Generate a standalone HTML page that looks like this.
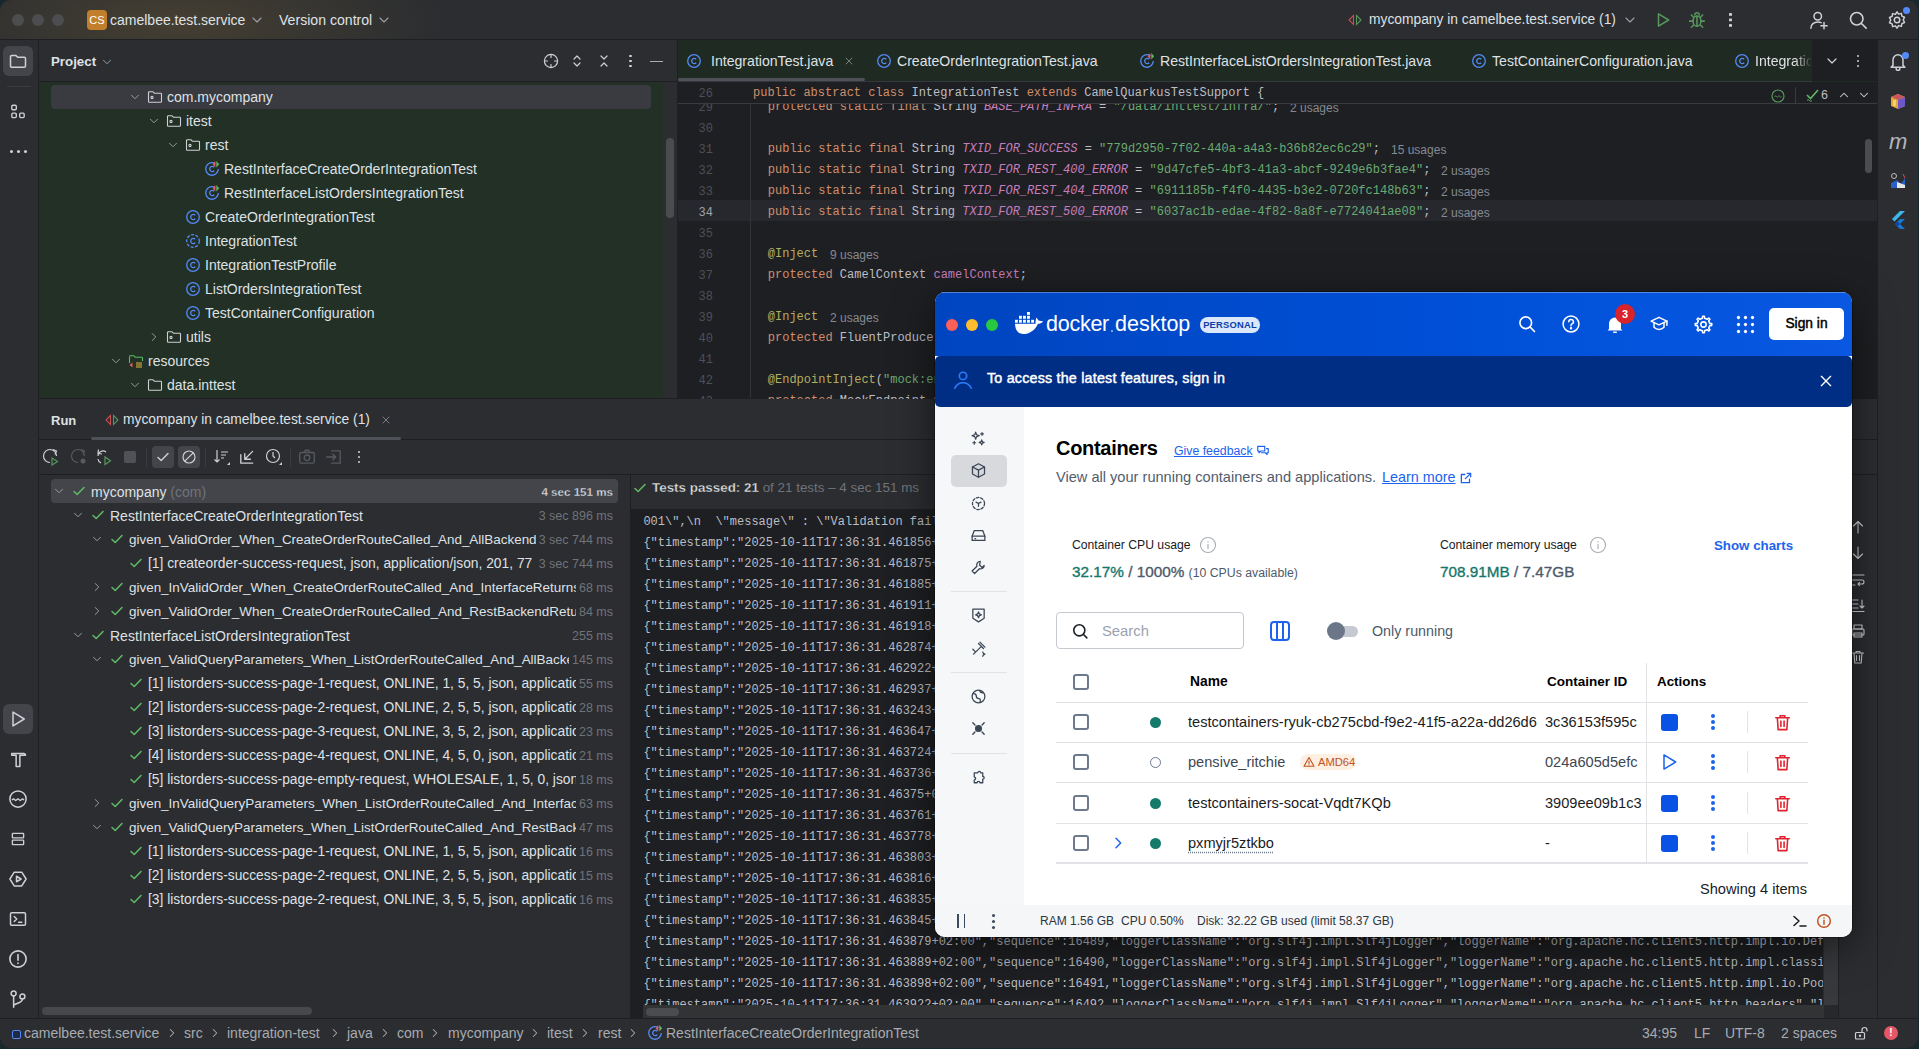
<!DOCTYPE html><html><head><meta charset="utf-8"><style>html,body{margin:0;padding:0;width:1919px;height:1049px;overflow:hidden;background:#1e1f22;font-family:"Liberation Sans",sans-serif;} div,svg{box-sizing:border-box}</style></head><body><div style="position:relative;width:1919px;height:1049px;overflow:hidden;background:#17292c"><div style="position:absolute;left:0;top:0;width:1918px;height:1048px;border-radius:11px;overflow:hidden;background:#1e1f22">
<div style="position:absolute;left:0px;top:0px;width:1919px;height:40px;background:#2b2d30;background:radial-gradient(ellipse 270px 80px at 175px 22px, rgba(130,105,55,0.30), rgba(130,105,55,0) 100%), #2b2d30;"></div>
<div style="position:absolute;left:0px;top:39px;width:1919px;height:1px;background:#1e1f22;"></div>
<div style="position:absolute;left:12px;top:14px;width:12px;height:12px;border-radius:6px;background:#4c4d4f"></div>
<div style="position:absolute;left:32px;top:14px;width:12px;height:12px;border-radius:6px;background:#4c4d4f"></div>
<div style="position:absolute;left:52px;top:14px;width:12px;height:12px;border-radius:6px;background:#4c4d4f"></div>
<div style="position:absolute;left:87px;top:10px;width:20px;height:20px;border-radius:4px;background:#c27f2b;color:#fff;font-size:11px;line-height:20px;text-align:center;font-family:'Liberation Sans',sans-serif;">CS</div>
<div style="position:absolute;left:110px;top:9.5px;height:21px;line-height:21px;font-size:14px;color:#dfe1e5;font-weight:normal;font-family:'Liberation Sans', sans-serif;white-space:pre;">camelbee.test.service</div>
<svg style="position:absolute;left:249.0px;top:12.0px;" width="16" height="16" viewBox="0 0 16 16" fill="none" stroke="#9da0a8" stroke-width="1.1" stroke-linecap="round" stroke-linejoin="round"><path d="M4 6l4 4 4-4"/></svg>
<div style="position:absolute;left:279px;top:9.5px;height:21px;line-height:21px;font-size:14.1px;color:#dfe1e5;font-weight:normal;font-family:'Liberation Sans', sans-serif;white-space:pre;">Version control</div>
<svg style="position:absolute;left:376.0px;top:12.0px;" width="16" height="16" viewBox="0 0 16 16" fill="none" stroke="#9da0a8" stroke-width="1.1" stroke-linecap="round" stroke-linejoin="round"><path d="M4 6l4 4 4-4"/></svg>
<svg style="position:absolute;left:1347px;top:12px;" width="16" height="16" viewBox="0 0 16 16" fill="none"><path d="M6.5 3.5L2 8l4.5 4.5z" stroke="#c94f4f" stroke-width="1.1" fill="none"/><path d="M9.5 3.5L14 8l-4.5 4.5z" stroke="#57965c" stroke-width="1.1" fill="none"/></svg>
<div style="position:absolute;left:1369px;top:10.0px;height:20px;line-height:20px;font-size:13.8px;color:#dfe1e5;font-weight:normal;font-family:'Liberation Sans', sans-serif;white-space:pre;">mycompany in camelbee.test.service (1)</div>
<svg style="position:absolute;left:1622.0px;top:12.0px;" width="16" height="16" viewBox="0 0 16 16" fill="none" stroke="#9da0a8" stroke-width="1.1" stroke-linecap="round" stroke-linejoin="round"><path d="M4 6l4 4 4-4"/></svg>
<svg style="position:absolute;left:1654.0px;top:11.0px;" width="18" height="18" viewBox="0 0 16 16" fill="none" stroke="#57965c" stroke-width="1.4" stroke-linecap="round" stroke-linejoin="round"><path d="M4 2.5v11l9-5.5z"/></svg>
<svg style="position:absolute;left:1688.0px;top:11.0px;" width="18" height="18" viewBox="0 0 16 16" fill="none" stroke="#57965c" stroke-width="1.4" stroke-linecap="round" stroke-linejoin="round"><ellipse cx="8" cy="9" rx="3.5" ry="4.5"/><path d="M8 4.5V13.5M4.5 9H1.5M14.5 9h-3M5 5.5L3 3.5M11 5.5l2-2M5 12.5l-2 2M11 12.5l2 2M6 3.5a2 2 0 0 1 4 0"/></svg>
<div style="position:absolute;left:1729px;top:13px;width:3px;height:14px;background:radial-gradient(circle at 1.5px 1.5px,#ced0d6 1.4px,transparent 1.6px) 0 0/3px 5.5px repeat-y"></div>
<svg style="position:absolute;left:1809.0px;top:10.0px;" width="20" height="20" viewBox="0 0 16 16" fill="none" stroke="#ced0d6" stroke-width="1.2" stroke-linecap="round" stroke-linejoin="round"><circle cx="7" cy="5" r="3"/><path d="M1.5 14.5c0-3 2.5-5 5.5-5 1 0 2 .2 2.7.6M12 10v5M9.5 12.5h5"/></svg>
<svg style="position:absolute;left:1848.0px;top:10.0px;" width="20" height="20" viewBox="0 0 16 16" fill="none" stroke="#ced0d6" stroke-width="1.3" stroke-linecap="round" stroke-linejoin="round"><circle cx="7" cy="7" r="5"/><path d="M11 11l3.5 3.5"/></svg>
<svg style="position:absolute;left:1887.0px;top:10.0px;" width="20" height="20" viewBox="0 0 16 16" fill="none" stroke="#ced0d6" stroke-width="1.2" stroke-linecap="round" stroke-linejoin="round"><circle cx="8" cy="8" r="2.2"/><path d="M8 1.5l1.3 1.8 2.2-.6.4 2.2 2.1.9-1 2 1 2.2-2.1.9-.4 2.2-2.2-.6L8 14.5l-1.3-1.8-2.2.6-.4-2.2-2.1-.9 1-2.2-1-2 2.1-.9.4-2.2 2.2.6z"/></svg>
<div style="position:absolute;left:1903px;top:7px;width:7px;height:7px;border-radius:4px;background:#548af7"></div>
<div style="position:absolute;left:0px;top:40px;width:38px;height:978px;background:#2b2d30;"></div>
<div style="position:absolute;left:38px;top:40px;width:1px;height:978px;background:#1e1f22;"></div>
<div style="position:absolute;left:1878px;top:40px;width:41px;height:978px;background:#2b2d30;"></div>
<div style="position:absolute;left:1877px;top:40px;width:1px;height:978px;background:#1e1f22;"></div>
<div style="position:absolute;left:0px;top:1018px;width:1919px;height:31px;background:#2b2d30;"></div>
<div style="position:absolute;left:0px;top:1018px;width:1919px;height:1px;background:#1e1f22;"></div>
<div style="position:absolute;left:3px;top:46px;width:30px;height:30px;background:#43454a;border-radius:6px;"></div>
<svg style="position:absolute;left:8.0px;top:51.0px;" width="20" height="20" viewBox="0 0 16 16" fill="none" stroke="#ced0d6" stroke-width="1.2" stroke-linecap="round" stroke-linejoin="round"><path d="M2 4.5a1 1 0 0 1 1-1h3.2l1.5 1.5H13a1 1 0 0 1 1 1V12a1 1 0 0 1-1 1H3a1 1 0 0 1-1-1z"/></svg>
<div style="position:absolute;left:7px;top:86px;width:24px;height:1px;background:#393b40;"></div>
<svg style="position:absolute;left:9.0px;top:103.0px;" width="18" height="18" viewBox="0 0 16 16" fill="none" stroke="#ced0d6" stroke-width="1.2" stroke-linecap="round" stroke-linejoin="round"><rect x="2.5" y="2" width="4" height="4" rx="1"/><rect x="2.5" y="9" width="4" height="4" rx="1"/><rect x="9.5" y="9" width="4" height="4" rx="1"/></svg>
<div style="position:absolute;left:9.5px;top:150px;width:3px;height:3px;border-radius:2px;background:#ced0d6"></div>
<div style="position:absolute;left:16.5px;top:150px;width:3px;height:3px;border-radius:2px;background:#ced0d6"></div>
<div style="position:absolute;left:23.5px;top:150px;width:3px;height:3px;border-radius:2px;background:#ced0d6"></div>
<div style="position:absolute;left:3px;top:704px;width:30px;height:30px;background:#43454a;border-radius:6px;"></div>
<svg style="position:absolute;left:8.0px;top:709.0px;" width="20" height="20" viewBox="0 0 16 16" fill="none" stroke="#ced0d6" stroke-width="1.2" stroke-linecap="round" stroke-linejoin="round"><path d="M4 2.5v11l9-5.5z"/></svg>
<svg style="position:absolute;left:8.0px;top:749.0px;" width="20" height="20" viewBox="0 0 16 16" fill="none" stroke="#ced0d6" stroke-width="1.2" stroke-linecap="round" stroke-linejoin="round"><path d="M3 3.5h9.5c1 0 1.5.8 1.5 1.5H9.5v9h-3V5H3z"/></svg>
<svg style="position:absolute;left:8.0px;top:789.0px;" width="20" height="20" viewBox="0 0 16 16" fill="none" stroke="#ced0d6" stroke-width="1.2" stroke-linecap="round" stroke-linejoin="round"><circle cx="8" cy="8" r="6.5"/><path d="M3.5 8.5c.7-.8 1.2-.8 1.8 0s1.1.8 1.8 0 1.1-.8 1.8 0 1.1.8 1.8 0 1.1-.8 1.8 0"/></svg>
<svg style="position:absolute;left:9.0px;top:830.0px;" width="18" height="18" viewBox="0 0 16 16" fill="none" stroke="#ced0d6" stroke-width="1.2" stroke-linecap="round" stroke-linejoin="round"><rect x="3" y="3" width="10" height="4" rx=".5"/><rect x="3" y="9" width="10" height="4" rx=".5"/></svg>
<svg style="position:absolute;left:8.0px;top:869.0px;" width="20" height="20" viewBox="0 0 16 16" fill="none" stroke="#ced0d6" stroke-width="1.2" stroke-linecap="round" stroke-linejoin="round"><path d="M5 2.5h6L14.5 8 11 13.5H5L1.5 8z"/><path d="M6.8 5.8v4.4L10.5 8z"/></svg>
<svg style="position:absolute;left:8.0px;top:909.0px;" width="20" height="20" viewBox="0 0 16 16" fill="none" stroke="#ced0d6" stroke-width="1.2" stroke-linecap="round" stroke-linejoin="round"><rect x="2" y="3" width="12" height="10" rx="1"/><path d="M5 6l2 2-2 2M8.5 10.5h2.5"/></svg>
<svg style="position:absolute;left:8.0px;top:949.0px;" width="20" height="20" viewBox="0 0 16 16" fill="none" stroke="#ced0d6" stroke-width="1.3" stroke-linecap="round" stroke-linejoin="round"><circle cx="8" cy="8" r="6.5"/><path d="M8 4.5v4.5M8 11.2v.3"/></svg>
<svg style="position:absolute;left:8.0px;top:989.0px;" width="20" height="20" viewBox="0 0 16 16" fill="none" stroke="#ced0d6" stroke-width="1.2" stroke-linecap="round" stroke-linejoin="round"><circle cx="4.5" cy="3.5" r="2"/><circle cx="11.5" cy="6" r="2"/><path d="M4.5 5.5v9M11.5 8c0 3-4 3-7 5"/></svg>
<svg style="position:absolute;left:1888.0px;top:51.0px;" width="20" height="20" viewBox="0 0 16 16" fill="none" stroke="#ced0d6" stroke-width="1.2" stroke-linecap="round" stroke-linejoin="round"><path d="M4 11.5V7a4 4 0 0 1 8 0v4.5l1.5 1.5h-11z"/><path d="M6.5 14a1.5 1.5 0 0 0 3 0"/></svg>
<div style="position:absolute;left:1902px;top:52px;width:7px;height:7px;border-radius:4px;background:#548af7"></div>
<svg style="position:absolute;left:1888px;top:91px;" width="20" height="20" viewBox="0 0 20 20" fill="none"><path d="M3 6l7-3 7 3v9l-7 3-7-3z" fill="#e0a93a"/><path d="M10 3l7 3-7 3-7-3z" fill="#c9565d"/><path d="M10 9v9l7-3V6z" fill="#6e58c9"/><path d="M5 9h3v6H5z" fill="#f5d06a"/></svg>
<div style="position:absolute;left:1889px;top:124.5px;height:33px;line-height:33px;font-size:22px;color:#b4b6bb;font-weight:normal;font-family:'Liberation Sans', sans-serif;white-space:pre;font-style:italic;">m</div>
<svg style="position:absolute;left:1888px;top:171px;" width="20" height="20" viewBox="0 0 20 20" fill="none"><circle cx="6" cy="5" r="2.5" stroke="#bbb" fill="none"/><path d="M3 12l6-3 4 4 4-6v10H3z" fill="#2b5fc7"/><path d="M9 11l8 3v3H9z" fill="#e6e6e6"/><path d="M15 3l2 4" stroke="#d94c4c"/></svg>
<svg style="position:absolute;left:1888px;top:209px;" width="20" height="22" viewBox="0 0 20 22" fill="none"><path d="M12 2L4 10l2.5 2.5L17 2z" fill="#3fb5e8"/><path d="M12 10l-5 5 5 5h5l-5-5 5-5z" fill="#1976d2"/><path d="M9.5 12.5l2.5 2.5-2.5 2.5-2.5-2.5z" fill="#0d47a1"/></svg>
<div style="position:absolute;left:39px;top:40px;width:638px;height:42px;background:#2b2d30;"></div>
<div style="position:absolute;left:51px;top:51.5px;height:19px;line-height:19px;font-size:13.3px;color:#dfe1e5;font-weight:bold;font-family:'Liberation Sans', sans-serif;white-space:pre;">Project</div>
<svg style="position:absolute;left:100.0px;top:55.0px;" width="14" height="14" viewBox="0 0 16 16" fill="none" stroke="#9da0a8" stroke-width="1.1" stroke-linecap="round" stroke-linejoin="round"><path d="M4 6l4 4 4-4"/></svg>
<svg style="position:absolute;left:543.0px;top:53.0px;" width="16" height="16" viewBox="0 0 16 16" fill="none" stroke="#ced0d6" stroke-width="1.2" stroke-linecap="round" stroke-linejoin="round"><circle cx="8" cy="8" r="6.6"/><path d="M8 2v2.5M8 11.5V14M2 8h2.5M11.5 8H14"/></svg>
<svg style="position:absolute;left:569.0px;top:53.0px;" width="16" height="16" viewBox="0 0 16 16" fill="none" stroke="#ced0d6" stroke-width="1.2" stroke-linecap="round" stroke-linejoin="round"><path d="M5 6l3-3 3 3M5 10l3 3 3-3"/></svg>
<svg style="position:absolute;left:596.0px;top:53.0px;" width="16" height="16" viewBox="0 0 16 16" fill="none" stroke="#ced0d6" stroke-width="1.2" stroke-linecap="round" stroke-linejoin="round"><path d="M5 3l3 3 3-3M5 13l3-3 3 3"/></svg>
<div style="position:absolute;left:629px;top:54.7px;width:2.6px;height:2.6px;border-radius:2px;background:#ced0d6"></div>
<div style="position:absolute;left:629px;top:59.7px;width:2.6px;height:2.6px;border-radius:2px;background:#ced0d6"></div>
<div style="position:absolute;left:629px;top:64.7px;width:2.6px;height:2.6px;border-radius:2px;background:#ced0d6"></div>
<div style="position:absolute;left:649.5px;top:60.5px;width:13px;height:1.8px;background:#a9acb1;"></div>
<div style="position:absolute;left:39px;top:82px;width:624px;height:316px;background:#223025;"></div>
<div style="position:absolute;left:39px;top:81px;width:638px;height:1px;background:#1e1f22;"></div>
<div style="position:absolute;left:663px;top:82px;width:14px;height:316px;background:#2b2d30;"></div>
<div style="position:absolute;left:666px;top:138px;width:8px;height:80px;background:#4a4c50;border-radius:4px;"></div>
<div style="position:absolute;left:677px;top:40px;width:1px;height:359px;background:#1e1f22;"></div>
<div style="position:absolute;left:39px;top:398px;width:1838px;height:1px;background:#1e1f22;"></div>
<div style="position:absolute;left:51px;top:85px;width:600px;height:24px;background:#393b40;border-radius:4px;"></div>
<svg style="position:absolute;left:128.0px;top:90.0px;" width="14" height="14" viewBox="0 0 16 16" fill="none" stroke="#9da0a8" stroke-width="1.1" stroke-linecap="round" stroke-linejoin="round"><path d="M4 6l4 4 4-4"/></svg>
<svg style="position:absolute;left:147.0px;top:89.0px;" width="16" height="16" viewBox="0 0 16 16" fill="none" stroke="#ced0d6" stroke-width="1.1" stroke-linecap="round" stroke-linejoin="round"><path d="M1.5 3.5a.8.8 0 0 1 .8-.8h3.5l1.5 1.5h6.4a.8.8 0 0 1 .8.8v7.5a.8.8 0 0 1-.8.8H2.3a.8.8 0 0 1-.8-.8z"/><circle cx="5" cy="8.5" r="1.1"/></svg>
<div style="position:absolute;left:167px;top:86.5px;height:21px;line-height:21px;font-size:14px;color:#dfe1e5;font-weight:normal;font-family:'Liberation Sans', sans-serif;white-space:pre;">com.mycompany</div>
<svg style="position:absolute;left:147.0px;top:114.0px;" width="14" height="14" viewBox="0 0 16 16" fill="none" stroke="#9da0a8" stroke-width="1.1" stroke-linecap="round" stroke-linejoin="round"><path d="M4 6l4 4 4-4"/></svg>
<svg style="position:absolute;left:166.0px;top:113.0px;" width="16" height="16" viewBox="0 0 16 16" fill="none" stroke="#ced0d6" stroke-width="1.1" stroke-linecap="round" stroke-linejoin="round"><path d="M1.5 3.5a.8.8 0 0 1 .8-.8h3.5l1.5 1.5h6.4a.8.8 0 0 1 .8.8v7.5a.8.8 0 0 1-.8.8H2.3a.8.8 0 0 1-.8-.8z"/><circle cx="5" cy="8.5" r="1.1"/></svg>
<div style="position:absolute;left:186px;top:110.5px;height:21px;line-height:21px;font-size:14px;color:#dfe1e5;font-weight:normal;font-family:'Liberation Sans', sans-serif;white-space:pre;">itest</div>
<svg style="position:absolute;left:166.0px;top:138.0px;" width="14" height="14" viewBox="0 0 16 16" fill="none" stroke="#9da0a8" stroke-width="1.1" stroke-linecap="round" stroke-linejoin="round"><path d="M4 6l4 4 4-4"/></svg>
<svg style="position:absolute;left:185.0px;top:137.0px;" width="16" height="16" viewBox="0 0 16 16" fill="none" stroke="#ced0d6" stroke-width="1.1" stroke-linecap="round" stroke-linejoin="round"><path d="M1.5 3.5a.8.8 0 0 1 .8-.8h3.5l1.5 1.5h6.4a.8.8 0 0 1 .8.8v7.5a.8.8 0 0 1-.8.8H2.3a.8.8 0 0 1-.8-.8z"/><circle cx="5" cy="8.5" r="1.1"/></svg>
<div style="position:absolute;left:205px;top:134.5px;height:21px;line-height:21px;font-size:14px;color:#dfe1e5;font-weight:normal;font-family:'Liberation Sans', sans-serif;white-space:pre;">rest</div>
<svg style="position:absolute;left:204px;top:161px;" width="16" height="16" viewBox="0 0 16 16" fill="none"><path d="M11.5 2.7A6.3 6.3 0 1 0 14.3 8" stroke="#548af7" stroke-width="1.3"/><path d="M10.2 6.2a2.6 2.6 0 1 0 0 3.6" stroke="#548af7" stroke-width="1.3"/><path d="M11.3 0L8.6 3.2l2.7 3.2z" fill="#e55765"/><path d="M12.3 0l2.9 3.2-2.9 3.2z" fill="#5fb865"/></svg>
<div style="position:absolute;left:224px;top:158.5px;height:21px;line-height:21px;font-size:14px;color:#dfe1e5;font-weight:normal;font-family:'Liberation Sans', sans-serif;white-space:pre;">RestInterfaceCreateOrderIntegrationTest</div>
<svg style="position:absolute;left:204px;top:185px;" width="16" height="16" viewBox="0 0 16 16" fill="none"><path d="M11.5 2.7A6.3 6.3 0 1 0 14.3 8" stroke="#548af7" stroke-width="1.3"/><path d="M10.2 6.2a2.6 2.6 0 1 0 0 3.6" stroke="#548af7" stroke-width="1.3"/><path d="M11.3 0L8.6 3.2l2.7 3.2z" fill="#e55765"/><path d="M12.3 0l2.9 3.2-2.9 3.2z" fill="#5fb865"/></svg>
<div style="position:absolute;left:224px;top:182.5px;height:21px;line-height:21px;font-size:14px;color:#dfe1e5;font-weight:normal;font-family:'Liberation Sans', sans-serif;white-space:pre;">RestInterfaceListOrdersIntegrationTest</div>
<svg style="position:absolute;left:185px;top:209px;" width="16" height="16" viewBox="0 0 16 16" fill="none"><circle cx="8" cy="8" r="6.3" stroke="#548af7" stroke-width="1.3"/><path d="M10.2 6.2a2.6 2.6 0 1 0 0 3.6" stroke="#548af7" stroke-width="1.3"/></svg>
<div style="position:absolute;left:205px;top:206.5px;height:21px;line-height:21px;font-size:14px;color:#dfe1e5;font-weight:normal;font-family:'Liberation Sans', sans-serif;white-space:pre;">CreateOrderIntegrationTest</div>
<svg style="position:absolute;left:185px;top:233px;" width="16" height="16" viewBox="0 0 16 16" fill="none"><circle cx="8" cy="8" r="6.3" stroke="#548af7" stroke-width="1.3" stroke-dasharray="3 1.5"/><path d="M10.2 6.2a2.6 2.6 0 1 0 0 3.6" stroke="#548af7" stroke-width="1.3"/></svg>
<div style="position:absolute;left:205px;top:230.5px;height:21px;line-height:21px;font-size:14px;color:#dfe1e5;font-weight:normal;font-family:'Liberation Sans', sans-serif;white-space:pre;">IntegrationTest</div>
<svg style="position:absolute;left:185px;top:257px;" width="16" height="16" viewBox="0 0 16 16" fill="none"><circle cx="8" cy="8" r="6.3" stroke="#548af7" stroke-width="1.3"/><path d="M10.2 6.2a2.6 2.6 0 1 0 0 3.6" stroke="#548af7" stroke-width="1.3"/></svg>
<div style="position:absolute;left:205px;top:254.5px;height:21px;line-height:21px;font-size:14px;color:#dfe1e5;font-weight:normal;font-family:'Liberation Sans', sans-serif;white-space:pre;">IntegrationTestProfile</div>
<svg style="position:absolute;left:185px;top:281px;" width="16" height="16" viewBox="0 0 16 16" fill="none"><circle cx="8" cy="8" r="6.3" stroke="#548af7" stroke-width="1.3"/><path d="M10.2 6.2a2.6 2.6 0 1 0 0 3.6" stroke="#548af7" stroke-width="1.3"/></svg>
<div style="position:absolute;left:205px;top:278.5px;height:21px;line-height:21px;font-size:14px;color:#dfe1e5;font-weight:normal;font-family:'Liberation Sans', sans-serif;white-space:pre;">ListOrdersIntegrationTest</div>
<svg style="position:absolute;left:185px;top:305px;" width="16" height="16" viewBox="0 0 16 16" fill="none"><circle cx="8" cy="8" r="6.3" stroke="#548af7" stroke-width="1.3"/><path d="M10.2 6.2a2.6 2.6 0 1 0 0 3.6" stroke="#548af7" stroke-width="1.3"/></svg>
<div style="position:absolute;left:205px;top:302.5px;height:21px;line-height:21px;font-size:14px;color:#dfe1e5;font-weight:normal;font-family:'Liberation Sans', sans-serif;white-space:pre;">TestContainerConfiguration</div>
<svg style="position:absolute;left:147.0px;top:330.0px;" width="14" height="14" viewBox="0 0 16 16" fill="none" stroke="#9da0a8" stroke-width="1.1" stroke-linecap="round" stroke-linejoin="round"><path d="M6 4l4 4-4 4"/></svg>
<svg style="position:absolute;left:166.0px;top:329.0px;" width="16" height="16" viewBox="0 0 16 16" fill="none" stroke="#ced0d6" stroke-width="1.1" stroke-linecap="round" stroke-linejoin="round"><path d="M1.5 3.5a.8.8 0 0 1 .8-.8h3.5l1.5 1.5h6.4a.8.8 0 0 1 .8.8v7.5a.8.8 0 0 1-.8.8H2.3a.8.8 0 0 1-.8-.8z"/><circle cx="5" cy="8.5" r="1.1"/></svg>
<div style="position:absolute;left:186px;top:326.5px;height:21px;line-height:21px;font-size:14px;color:#dfe1e5;font-weight:normal;font-family:'Liberation Sans', sans-serif;white-space:pre;">utils</div>
<svg style="position:absolute;left:109.0px;top:354.0px;" width="14" height="14" viewBox="0 0 16 16" fill="none" stroke="#9da0a8" stroke-width="1.1" stroke-linecap="round" stroke-linejoin="round"><path d="M4 6l4 4 4-4"/></svg>
<svg style="position:absolute;left:128px;top:353px;" width="16" height="16" viewBox="0 0 16 16" fill="none"><path d="M1.5 3.5a.8.8 0 0 1 .8-.8h3.5l1.5 1.5h6.4a.8.8 0 0 1 .8.8V8" stroke="#5fb865" stroke-width="1.1"/><path d="M1.5 3.5V10" stroke="#5fb865" stroke-width="1.1"/><path d="M4.5 9.5L1.5 12l3 2.5z" fill="#e55765"/><path d="M8 10h6M8 12h6M8 14h6" stroke="#e8b53e" stroke-width="1"/></svg>
<div style="position:absolute;left:148px;top:350.5px;height:21px;line-height:21px;font-size:14px;color:#dfe1e5;font-weight:normal;font-family:'Liberation Sans', sans-serif;white-space:pre;">resources</div>
<svg style="position:absolute;left:128.0px;top:378.0px;" width="14" height="14" viewBox="0 0 16 16" fill="none" stroke="#9da0a8" stroke-width="1.1" stroke-linecap="round" stroke-linejoin="round"><path d="M4 6l4 4 4-4"/></svg>
<svg style="position:absolute;left:147.0px;top:377.0px;" width="16" height="16" viewBox="0 0 16 16" fill="none" stroke="#ced0d6" stroke-width="1.1" stroke-linecap="round" stroke-linejoin="round"><path d="M1.5 3.5a.8.8 0 0 1 .8-.8h3.5l1.5 1.5h6.4a.8.8 0 0 1 .8.8v7.5a.8.8 0 0 1-.8.8H2.3a.8.8 0 0 1-.8-.8z"/></svg>
<div style="position:absolute;left:167px;top:374.5px;height:21px;line-height:21px;font-size:14px;color:#dfe1e5;font-weight:normal;font-family:'Liberation Sans', sans-serif;white-space:pre;">data.inttest</div>
<div style="position:absolute;left:678px;top:40px;width:1199px;height:42px;background:#1f2a22;"></div>
<div style="position:absolute;left:678px;top:82px;width:1199px;height:316px;background:#1e1f22;"></div>
<div style="position:absolute;left:678px;top:78px;width:187px;height:3px;background:#4e5157;border-radius:2px;"></div>
<svg style="position:absolute;left:686px;top:53px;" width="16" height="16" viewBox="0 0 16 16" fill="none"><circle cx="8" cy="8" r="6.3" stroke="#548af7" stroke-width="1.3"/><path d="M10.2 6.2a2.6 2.6 0 1 0 0 3.6" stroke="#548af7" stroke-width="1.3"/></svg>
<div style="position:absolute;left:711px;top:50.5px;height:21px;line-height:21px;font-size:14.1px;color:#dfe1e5;font-weight:normal;font-family:'Liberation Sans', sans-serif;white-space:pre;">IntegrationTest.java</div>
<svg style="position:absolute;left:843.0px;top:55.0px;" width="12" height="12" viewBox="0 0 16 16" fill="none" stroke="#8c8f96" stroke-width="1.1" stroke-linecap="round" stroke-linejoin="round"><path d="M4 4l8 8M12 4l-8 8"/></svg>
<svg style="position:absolute;left:876px;top:53px;" width="16" height="16" viewBox="0 0 16 16" fill="none"><circle cx="8" cy="8" r="6.3" stroke="#548af7" stroke-width="1.3"/><path d="M10.2 6.2a2.6 2.6 0 1 0 0 3.6" stroke="#548af7" stroke-width="1.3"/></svg>
<div style="position:absolute;left:897px;top:50.5px;height:21px;line-height:21px;font-size:14.1px;color:#dfe1e5;font-weight:normal;font-family:'Liberation Sans', sans-serif;white-space:pre;">CreateOrderIntegrationTest.java</div>
<svg style="position:absolute;left:1139px;top:53px;" width="16" height="16" viewBox="0 0 16 16" fill="none"><path d="M11.5 2.7A6.3 6.3 0 1 0 14.3 8" stroke="#548af7" stroke-width="1.3"/><path d="M10.2 6.2a2.6 2.6 0 1 0 0 3.6" stroke="#548af7" stroke-width="1.3"/><path d="M11.3 0L8.6 3.2l2.7 3.2z" fill="#e55765"/><path d="M12.3 0l2.9 3.2-2.9 3.2z" fill="#5fb865"/></svg>
<div style="position:absolute;left:1160px;top:50.5px;height:21px;line-height:21px;font-size:14.1px;color:#dfe1e5;font-weight:normal;font-family:'Liberation Sans', sans-serif;white-space:pre;">RestInterfaceListOrdersIntegrationTest.java</div>
<svg style="position:absolute;left:1471px;top:53px;" width="16" height="16" viewBox="0 0 16 16" fill="none"><circle cx="8" cy="8" r="6.3" stroke="#548af7" stroke-width="1.3"/><path d="M10.2 6.2a2.6 2.6 0 1 0 0 3.6" stroke="#548af7" stroke-width="1.3"/></svg>
<div style="position:absolute;left:1492px;top:50.5px;height:21px;line-height:21px;font-size:14.1px;color:#dfe1e5;font-weight:normal;font-family:'Liberation Sans', sans-serif;white-space:pre;">TestContainerConfiguration.java</div>
<svg style="position:absolute;left:1734px;top:53px;" width="16" height="16" viewBox="0 0 16 16" fill="none"><circle cx="8" cy="8" r="6.3" stroke="#548af7" stroke-width="1.3"/><path d="M10.2 6.2a2.6 2.6 0 1 0 0 3.6" stroke="#548af7" stroke-width="1.3"/></svg>
<div style="position:absolute;left:1755px;top:50px;width:57px;height:22px;overflow:hidden;"><div style="line-height:22px;font-size:14.1px;color:#dfe1e5;white-space:pre;-webkit-mask-image:linear-gradient(90deg,#000 70%,transparent 100%)">IntegrationTest.java</div></div>
<div style="position:absolute;left:1812px;top:40px;width:65px;height:41px;background:#1e1f22;"></div>
<svg style="position:absolute;left:1824.0px;top:53.0px;" width="16" height="16" viewBox="0 0 16 16" fill="none" stroke="#ced0d6" stroke-width="1.2" stroke-linecap="round" stroke-linejoin="round"><path d="M4 6l4 4 4-4"/></svg>
<div style="position:absolute;left:1856.7px;top:54.7px;width:2.6px;height:2.6px;border-radius:2px;background:#ced0d6"></div>
<div style="position:absolute;left:1856.7px;top:59.7px;width:2.6px;height:2.6px;border-radius:2px;background:#ced0d6"></div>
<div style="position:absolute;left:1856.7px;top:64.7px;width:2.6px;height:2.6px;border-radius:2px;background:#ced0d6"></div>
<div style="position:absolute;left:678px;top:81px;width:1134px;height:1px;background:#34373b;"></div>
<div style="position:absolute;left:678px;top:200px;width:1199px;height:21px;background:#26282e;"></div>
<div style="position:absolute;left:750px;top:103px;width:1px;height:295px;background:#313438;"></div>
<div style="position:absolute;right:1205px;top:98.0px;height:21px;line-height:21px;font-size:12px;color:#4b5059;font-weight:normal;font-family:'Liberation Mono', monospace;white-space:pre;text-align:right;">29</div>
<div style="position:absolute;left:767.8px;top:97.0px;height:21px;line-height:21px;font-size:12px;font-family:'Liberation Mono', monospace;white-space:pre;"><span style="color:#cf8e6d;">protected </span><span style="color:#cf8e6d;">static </span><span style="color:#cf8e6d;">final </span><span style="color:#bcbec4;">String </span><span style="color:#c77dbb;font-style:italic;">BASE_PATH_INFRA</span><span style="color:#bcbec4;"> = </span><span style="color:#6aab73;">&quot;/data/inttest/infra/&quot;</span><span style="color:#bcbec4;">;</span></div>
<div style="position:absolute;left:1290px;top:98.5px;height:18px;line-height:18px;font-size:12px;color:#868a91;font-weight:normal;font-family:'Liberation Sans', sans-serif;white-space:pre;">2 usages</div>
<div style="position:absolute;right:1205px;top:119.0px;height:21px;line-height:21px;font-size:12px;color:#4b5059;font-weight:normal;font-family:'Liberation Mono', monospace;white-space:pre;text-align:right;">30</div>
<div style="position:absolute;right:1205px;top:140.0px;height:21px;line-height:21px;font-size:12px;color:#4b5059;font-weight:normal;font-family:'Liberation Mono', monospace;white-space:pre;text-align:right;">31</div>
<div style="position:absolute;left:767.8px;top:139.0px;height:21px;line-height:21px;font-size:12px;font-family:'Liberation Mono', monospace;white-space:pre;"><span style="color:#cf8e6d;">public </span><span style="color:#cf8e6d;">static </span><span style="color:#cf8e6d;">final </span><span style="color:#bcbec4;">String </span><span style="color:#c77dbb;font-style:italic;">TXID_FOR_SUCCESS</span><span style="color:#bcbec4;"> = </span><span style="color:#6aab73;">&quot;779d2950-7f02-440a-a4a3-b36b82ec6c29&quot;</span><span style="color:#bcbec4;">;</span></div>
<div style="position:absolute;left:1391px;top:140.5px;height:18px;line-height:18px;font-size:12px;color:#868a91;font-weight:normal;font-family:'Liberation Sans', sans-serif;white-space:pre;">15 usages</div>
<div style="position:absolute;right:1205px;top:161.0px;height:21px;line-height:21px;font-size:12px;color:#4b5059;font-weight:normal;font-family:'Liberation Mono', monospace;white-space:pre;text-align:right;">32</div>
<div style="position:absolute;left:767.8px;top:160.0px;height:21px;line-height:21px;font-size:12px;font-family:'Liberation Mono', monospace;white-space:pre;"><span style="color:#cf8e6d;">public </span><span style="color:#cf8e6d;">static </span><span style="color:#cf8e6d;">final </span><span style="color:#bcbec4;">String </span><span style="color:#c77dbb;font-style:italic;">TXID_FOR_REST_400_ERROR</span><span style="color:#bcbec4;"> = </span><span style="color:#6aab73;">&quot;9d47cfe5-4bf3-41a3-abcf-9249e6b3fae4&quot;</span><span style="color:#bcbec4;">;</span></div>
<div style="position:absolute;left:1441px;top:161.5px;height:18px;line-height:18px;font-size:12px;color:#868a91;font-weight:normal;font-family:'Liberation Sans', sans-serif;white-space:pre;">2 usages</div>
<div style="position:absolute;right:1205px;top:182.0px;height:21px;line-height:21px;font-size:12px;color:#4b5059;font-weight:normal;font-family:'Liberation Mono', monospace;white-space:pre;text-align:right;">33</div>
<div style="position:absolute;left:767.8px;top:181.0px;height:21px;line-height:21px;font-size:12px;font-family:'Liberation Mono', monospace;white-space:pre;"><span style="color:#cf8e6d;">public </span><span style="color:#cf8e6d;">static </span><span style="color:#cf8e6d;">final </span><span style="color:#bcbec4;">String </span><span style="color:#c77dbb;font-style:italic;">TXID_FOR_REST_404_ERROR</span><span style="color:#bcbec4;"> = </span><span style="color:#6aab73;">&quot;6911185b-f4f0-4435-b3e2-0720fc148b63&quot;</span><span style="color:#bcbec4;">;</span></div>
<div style="position:absolute;left:1441px;top:182.5px;height:18px;line-height:18px;font-size:12px;color:#868a91;font-weight:normal;font-family:'Liberation Sans', sans-serif;white-space:pre;">2 usages</div>
<div style="position:absolute;right:1205px;top:203.0px;height:21px;line-height:21px;font-size:12px;color:#a1a3ab;font-weight:normal;font-family:'Liberation Mono', monospace;white-space:pre;text-align:right;">34</div>
<div style="position:absolute;left:767.8px;top:202.0px;height:21px;line-height:21px;font-size:12px;font-family:'Liberation Mono', monospace;white-space:pre;"><span style="color:#cf8e6d;">public </span><span style="color:#cf8e6d;">static </span><span style="color:#cf8e6d;">final </span><span style="color:#bcbec4;">String </span><span style="color:#c77dbb;font-style:italic;">TXID_FOR_REST_500_ERROR</span><span style="color:#bcbec4;"> = </span><span style="color:#6aab73;">&quot;6037ac1b-edae-4f82-8a8f-e7724041ae08&quot;</span><span style="color:#bcbec4;">;</span></div>
<div style="position:absolute;left:1441px;top:203.5px;height:18px;line-height:18px;font-size:12px;color:#868a91;font-weight:normal;font-family:'Liberation Sans', sans-serif;white-space:pre;">2 usages</div>
<div style="position:absolute;right:1205px;top:224.0px;height:21px;line-height:21px;font-size:12px;color:#4b5059;font-weight:normal;font-family:'Liberation Mono', monospace;white-space:pre;text-align:right;">35</div>
<div style="position:absolute;right:1205px;top:245.0px;height:21px;line-height:21px;font-size:12px;color:#4b5059;font-weight:normal;font-family:'Liberation Mono', monospace;white-space:pre;text-align:right;">36</div>
<div style="position:absolute;left:767.8px;top:244.0px;height:21px;line-height:21px;font-size:12px;font-family:'Liberation Mono', monospace;white-space:pre;"><span style="color:#b3ae60;">@Inject</span></div>
<div style="position:absolute;left:830px;top:245.5px;height:18px;line-height:18px;font-size:12px;color:#868a91;font-weight:normal;font-family:'Liberation Sans', sans-serif;white-space:pre;">9 usages</div>
<div style="position:absolute;right:1205px;top:266.0px;height:21px;line-height:21px;font-size:12px;color:#4b5059;font-weight:normal;font-family:'Liberation Mono', monospace;white-space:pre;text-align:right;">37</div>
<div style="position:absolute;left:767.8px;top:265.0px;height:21px;line-height:21px;font-size:12px;font-family:'Liberation Mono', monospace;white-space:pre;"><span style="color:#cf8e6d;">protected </span><span style="color:#bcbec4;">CamelContext </span><span style="color:#c77dbb;">camelContext</span><span style="color:#bcbec4;">;</span></div>
<div style="position:absolute;right:1205px;top:287.0px;height:21px;line-height:21px;font-size:12px;color:#4b5059;font-weight:normal;font-family:'Liberation Mono', monospace;white-space:pre;text-align:right;">38</div>
<div style="position:absolute;right:1205px;top:308.0px;height:21px;line-height:21px;font-size:12px;color:#4b5059;font-weight:normal;font-family:'Liberation Mono', monospace;white-space:pre;text-align:right;">39</div>
<div style="position:absolute;left:767.8px;top:307.0px;height:21px;line-height:21px;font-size:12px;font-family:'Liberation Mono', monospace;white-space:pre;"><span style="color:#b3ae60;">@Inject</span></div>
<div style="position:absolute;left:830px;top:308.5px;height:18px;line-height:18px;font-size:12px;color:#868a91;font-weight:normal;font-family:'Liberation Sans', sans-serif;white-space:pre;">2 usages</div>
<div style="position:absolute;right:1205px;top:329.0px;height:21px;line-height:21px;font-size:12px;color:#4b5059;font-weight:normal;font-family:'Liberation Mono', monospace;white-space:pre;text-align:right;">40</div>
<div style="position:absolute;left:767.8px;top:328.0px;height:21px;line-height:21px;font-size:12px;font-family:'Liberation Mono', monospace;white-space:pre;"><span style="color:#cf8e6d;">protected </span><span style="color:#bcbec4;">FluentProducerTemplate </span><span style="color:#c77dbb;">fluentProducerTemplate</span><span style="color:#bcbec4;">;</span></div>
<div style="position:absolute;right:1205px;top:350.0px;height:21px;line-height:21px;font-size:12px;color:#4b5059;font-weight:normal;font-family:'Liberation Mono', monospace;white-space:pre;text-align:right;">41</div>
<div style="position:absolute;right:1205px;top:371.0px;height:21px;line-height:21px;font-size:12px;color:#4b5059;font-weight:normal;font-family:'Liberation Mono', monospace;white-space:pre;text-align:right;">42</div>
<div style="position:absolute;left:767.8px;top:370.0px;height:21px;line-height:21px;font-size:12px;font-family:'Liberation Mono', monospace;white-space:pre;"><span style="color:#b3ae60;">@EndpointInject</span><span style="color:#bcbec4;">(</span><span style="color:#6aab73;">&quot;mock:endpoint&quot;</span><span style="color:#bcbec4;">)</span></div>
<div style="position:absolute;right:1205px;top:392.0px;height:21px;line-height:21px;font-size:12px;color:#4b5059;font-weight:normal;font-family:'Liberation Mono', monospace;white-space:pre;text-align:right;">43</div>
<div style="position:absolute;left:767.8px;top:391.0px;height:21px;line-height:21px;font-size:12px;font-family:'Liberation Mono', monospace;white-space:pre;"><span style="color:#cf8e6d;">protected </span><span style="color:#bcbec4;">MockEndpoint </span><span style="color:#c77dbb;">mockEndpoint</span><span style="color:#bcbec4;">;</span></div>
<div style="position:absolute;left:678px;top:82px;width:1199px;height:21px;background:#1e1f22;"></div>
<div style="position:absolute;left:678px;top:103px;width:1199px;height:1px;background:#393b40;"></div>
<div style="position:absolute;right:1205px;top:84.0px;height:21px;line-height:21px;font-size:12px;color:#4b5059;font-weight:normal;font-family:'Liberation Mono', monospace;white-space:pre;text-align:right;">26</div>
<div style="position:absolute;left:753px;top:83.0px;height:21px;line-height:21px;font-size:12px;font-family:'Liberation Mono', monospace;white-space:pre;"><span style="color:#cf8e6d;">public </span><span style="color:#cf8e6d;">abstract </span><span style="color:#cf8e6d;">class </span><span style="color:#bcbec4;">IntegrationTest </span><span style="color:#cf8e6d;">extends </span><span style="color:#bcbec4;">CamelQuarkusTestSupport {</span></div>
<div style="position:absolute;left:1765px;top:82px;width:112px;height:21px;background:#1e1f22;"></div>
<svg style="position:absolute;left:1770px;top:88px;" width="16" height="16" viewBox="0 0 16 16" fill="none"><circle cx="8" cy="8" r="6" stroke="#57965c" stroke-width="1.2"/><path d="M4.5 8.5c.7-.8 1.2-.8 1.8 0s1.1.8 1.8 0 1.1-.8 1.8 0 1.1.8 1.8 0" stroke="#57965c" stroke-width="1"/></svg>
<div style="position:absolute;left:1795px;top:87px;width:1px;height:16px;background:#393b40;"></div>
<svg style="position:absolute;left:1805px;top:87px;" width="16" height="16" viewBox="0 0 16 16" fill="none"><path d="M2 8l3.5 3.5L13 3" stroke="#5fb865" stroke-width="1.6"/><path d="M2 13.5c1-1 1.5-1 2.5 0s1.5 1 2.5 0" stroke="#5fb865" stroke-width="1"/></svg>
<div style="position:absolute;left:1821px;top:86.0px;height:18px;line-height:18px;font-size:12.5px;color:#bcbec4;font-weight:normal;font-family:'Liberation Sans', sans-serif;white-space:pre;">6</div>
<svg style="position:absolute;left:1837.0px;top:88.0px;" width="14" height="14" viewBox="0 0 16 16" fill="none" stroke="#ced0d6" stroke-width="1.2" stroke-linecap="round" stroke-linejoin="round"><path d="M4 10l4-4 4 4"/></svg>
<svg style="position:absolute;left:1857.0px;top:88.0px;" width="14" height="14" viewBox="0 0 16 16" fill="none" stroke="#ced0d6" stroke-width="1.2" stroke-linecap="round" stroke-linejoin="round"><path d="M4 6l4 4 4-4"/></svg>
<div style="position:absolute;left:1865px;top:139px;width:7px;height:34px;background:#4a4c50;border-radius:4px;"></div>
<div style="position:absolute;left:39px;top:399px;width:1838px;height:619px;background:#2b2d30;"></div>
<div style="position:absolute;left:39px;top:439px;width:1838px;height:1px;background:#1e1f22;"></div>
<div style="position:absolute;left:39px;top:474px;width:1838px;height:1px;background:#1e1f22;"></div>
<div style="position:absolute;left:51px;top:410.5px;height:19px;line-height:19px;font-size:13px;color:#dfe1e5;font-weight:bold;font-family:'Liberation Sans', sans-serif;white-space:pre;">Run</div>
<svg style="position:absolute;left:104px;top:412px;" width="16" height="16" viewBox="0 0 16 16" fill="none"><path d="M6.5 3.5L2 8l4.5 4.5z" stroke="#c94f4f" stroke-width="1.1"/><path d="M9.5 3.5L14 8l-4.5 4.5z" stroke="#57965c" stroke-width="1.1"/></svg>
<div style="position:absolute;left:123px;top:410.0px;height:20px;line-height:20px;font-size:13.8px;color:#dfe1e5;font-weight:normal;font-family:'Liberation Sans', sans-serif;white-space:pre;">mycompany in camelbee.test.service (1)</div>
<svg style="position:absolute;left:380.0px;top:414.0px;" width="12" height="12" viewBox="0 0 16 16" fill="none" stroke="#8c8f96" stroke-width="1.1" stroke-linecap="round" stroke-linejoin="round"><path d="M4 4l8 8M12 4l-8 8"/></svg>
<div style="position:absolute;left:91px;top:437px;width:310px;height:3px;background:#4e5157;border-radius:2px;"></div>
<svg style="position:absolute;left:42px;top:448px;" width="18" height="18" viewBox="0 0 18 18" fill="none"><path d="M14.5 8A6.5 6.5 0 1 0 8 14.5" stroke="#ced0d6" stroke-width="1.2"/><path d="M11 1.5l3.5 1.5-1.5 3.5" stroke="#ced0d6" stroke-width="1.2"/><path d="M10 10v7l5.5-3.5z" stroke="#57965c" stroke-width="1.2"/></svg>
<svg style="position:absolute;left:70px;top:448px;" width="18" height="18" viewBox="0 0 18 18" fill="none"><path d="M14.5 8A6.5 6.5 0 1 0 8 14.5" stroke="#56595e" stroke-width="1.2"/><path d="M11 1.5l3.5 1.5-1.5 3.5" stroke="#56595e" stroke-width="1.2"/><circle cx="13" cy="13" r="2.5" fill="#56595e"/></svg>
<svg style="position:absolute;left:95px;top:448px;" width="18" height="18" viewBox="0 0 18 18" fill="none"><path d="M3 8a5 5 0 0 1 8-4M3.5 1.5L3 5.5l4 .5" stroke="#ced0d6" stroke-width="1.2"/><path d="M6 15a5 5 0 0 1-3-4" stroke="#ced0d6" stroke-width="1.2"/><path d="M10 9v7.5l5.5-3.7z" stroke="#57965c" stroke-width="1.2"/></svg>
<div style="position:absolute;left:124px;top:451px;width:12px;height:12px;background:#505257;border-radius:2px;"></div>
<div style="position:absolute;left:146px;top:447px;width:1px;height:20px;background:#393b40;"></div>
<div style="position:absolute;left:152px;top:446px;width:22px;height:22px;background:#43454a;border-radius:4px;"></div>
<svg style="position:absolute;left:155.0px;top:449.0px;" width="16" height="16" viewBox="0 0 16 16" fill="none" stroke="#ced0d6" stroke-width="1.4" stroke-linecap="round" stroke-linejoin="round"><path d="M3 8.5l3.2 3L13 4.5"/></svg>
<div style="position:absolute;left:178px;top:446px;width:22px;height:22px;background:#43454a;border-radius:4px;"></div>
<svg style="position:absolute;left:181.0px;top:449.0px;" width="16" height="16" viewBox="0 0 16 16" fill="none" stroke="#ced0d6" stroke-width="1.2" stroke-linecap="round" stroke-linejoin="round"><circle cx="8" cy="8" r="6"/><path d="M3.8 12.2l8.4-8.4"/></svg>
<div style="position:absolute;left:205px;top:447px;width:1px;height:20px;background:#393b40;"></div>
<svg style="position:absolute;left:213px;top:448px;" width="18" height="18" viewBox="0 0 18 18" fill="none"><path d="M4 2v12M1.5 11.5L4 14l2.5-2.5M8 4h7M8 7h5M8 10h3" stroke="#ced0d6" stroke-width="1.2"/><path d="M17 14v3h-3z" fill="#ced0d6"/></svg>
<svg style="position:absolute;left:238.0px;top:448.0px;" width="18" height="18" viewBox="0 0 16 16" fill="none" stroke="#ced0d6" stroke-width="1.2" stroke-linecap="round" stroke-linejoin="round"><path d="M13 3L6 10M6 5v5h5M2.5 6v7.5H13"/></svg>
<svg style="position:absolute;left:265px;top:448px;" width="18" height="18" viewBox="0 0 18 18" fill="none"><circle cx="8" cy="8" r="6.5" stroke="#ced0d6" stroke-width="1.2"/><path d="M8 4v4l2 2" stroke="#ced0d6" stroke-width="1.2"/><path d="M17 14v3h-3z" fill="#ced0d6"/></svg>
<div style="position:absolute;left:290px;top:447px;width:1px;height:20px;background:#393b40;"></div>
<svg style="position:absolute;left:298.0px;top:448.0px;" width="18" height="18" viewBox="0 0 16 16" fill="none" stroke="#56595e" stroke-width="1.2" stroke-linecap="round" stroke-linejoin="round"><rect x="1.5" y="4" width="13" height="9.5" rx="1.5"/><circle cx="8" cy="8.7" r="2.5"/><path d="M5.5 4l1-2h3l1 2"/></svg>
<svg style="position:absolute;left:325.0px;top:448.0px;" width="18" height="18" viewBox="0 0 16 16" fill="none" stroke="#56595e" stroke-width="1.2" stroke-linecap="round" stroke-linejoin="round"><path d="M6 2.5h7.5v11H6M1.5 8h8M7 5.5L9.5 8 7 10.5"/></svg>
<div style="position:absolute;left:357.7px;top:450.7px;width:2.6px;height:2.6px;border-radius:2px;background:#ced0d6"></div>
<div style="position:absolute;left:357.7px;top:455.7px;width:2.6px;height:2.6px;border-radius:2px;background:#ced0d6"></div>
<div style="position:absolute;left:357.7px;top:460.7px;width:2.6px;height:2.6px;border-radius:2px;background:#ced0d6"></div>
<div style="position:absolute;left:630px;top:475px;width:1px;height:543px;background:#1e1f22;"></div>
<div style="position:absolute;left:51px;top:479px;width:567px;height:24px;background:#43454a;border-radius:4px;"></div>
<svg style="position:absolute;left:52.0px;top:484.0px;" width="14" height="14" viewBox="0 0 16 16" fill="none" stroke="#9da0a8" stroke-width="1.1" stroke-linecap="round" stroke-linejoin="round"><path d="M4 6l4 4 4-4"/></svg>
<svg style="position:absolute;left:71.0px;top:483.0px;" width="16" height="16" viewBox="0 0 16 16" fill="none" stroke="#5fb865" stroke-width="1.6" stroke-linecap="round" stroke-linejoin="round"><path d="M3 8.5l3.2 3L13 4.5"/></svg>
<div style="position:absolute;left:91px;top:481.5px;height:20px;line-height:20px;font-size:14px;color:#dfe1e5;white-space:pre">mycompany <span style="color:#6f737a">(com)</span></div>
<div style="position:absolute;right:1305px;top:483.0px;height:17px;line-height:17px;font-size:11.6px;color:#dfe1e5;font-weight:bold;font-family:'Liberation Sans', sans-serif;white-space:pre;text-align:right;-webkit-text-stroke:0.3px #43454a;">4 sec 151 ms</div>
<svg style="position:absolute;left:71.0px;top:508.0px;" width="14" height="14" viewBox="0 0 16 16" fill="none" stroke="#9da0a8" stroke-width="1.1" stroke-linecap="round" stroke-linejoin="round"><path d="M4 6l4 4 4-4"/></svg>
<svg style="position:absolute;left:90.0px;top:507.0px;" width="16" height="16" viewBox="0 0 16 16" fill="none" stroke="#5fb865" stroke-width="1.6" stroke-linecap="round" stroke-linejoin="round"><path d="M3 8.5l3.2 3L13 4.5"/></svg>
<div style="position:absolute;left:110px;top:505.5px;width:426px;height:20px;overflow:hidden;line-height:20px;font-size:14px;color:#dfe1e5;white-space:pre">RestInterfaceCreateOrderIntegrationTest</div>
<div style="position:absolute;right:1305px;top:507.0px;height:18px;line-height:18px;font-size:12.5px;color:#6f737a;font-weight:normal;font-family:'Liberation Sans', sans-serif;white-space:pre;text-align:right;">3 sec 896 ms</div>
<svg style="position:absolute;left:90.0px;top:532.0px;" width="14" height="14" viewBox="0 0 16 16" fill="none" stroke="#9da0a8" stroke-width="1.1" stroke-linecap="round" stroke-linejoin="round"><path d="M4 6l4 4 4-4"/></svg>
<svg style="position:absolute;left:109.0px;top:531.0px;" width="16" height="16" viewBox="0 0 16 16" fill="none" stroke="#5fb865" stroke-width="1.6" stroke-linecap="round" stroke-linejoin="round"><path d="M3 8.5l3.2 3L13 4.5"/></svg>
<div style="position:absolute;left:129px;top:529.5px;width:407px;height:20px;overflow:hidden;line-height:20px;font-size:13.45px;color:#dfe1e5;white-space:pre">given_ValidOrder_When_CreateOrderRouteCalled_And_AllBackendAvailable</div>
<div style="position:absolute;right:1305px;top:531.0px;height:18px;line-height:18px;font-size:12.5px;color:#6f737a;font-weight:normal;font-family:'Liberation Sans', sans-serif;white-space:pre;text-align:right;">3 sec 744 ms</div>
<svg style="position:absolute;left:128.0px;top:555.0px;" width="16" height="16" viewBox="0 0 16 16" fill="none" stroke="#5fb865" stroke-width="1.6" stroke-linecap="round" stroke-linejoin="round"><path d="M3 8.5l3.2 3L13 4.5"/></svg>
<div style="position:absolute;left:148px;top:553.5px;width:388px;height:20px;overflow:hidden;line-height:20px;font-size:13.8px;color:#dfe1e5;white-space:pre">[1] createorder-success-request, json, application/json, 201, 77</div>
<div style="position:absolute;right:1305px;top:555.0px;height:18px;line-height:18px;font-size:12.5px;color:#6f737a;font-weight:normal;font-family:'Liberation Sans', sans-serif;white-space:pre;text-align:right;">3 sec 744 ms</div>
<svg style="position:absolute;left:90.0px;top:580.0px;" width="14" height="14" viewBox="0 0 16 16" fill="none" stroke="#9da0a8" stroke-width="1.1" stroke-linecap="round" stroke-linejoin="round"><path d="M6 4l4 4-4 4"/></svg>
<svg style="position:absolute;left:109.0px;top:579.0px;" width="16" height="16" viewBox="0 0 16 16" fill="none" stroke="#5fb865" stroke-width="1.6" stroke-linecap="round" stroke-linejoin="round"><path d="M3 8.5l3.2 3L13 4.5"/></svg>
<div style="position:absolute;left:129px;top:577.5px;width:447px;height:20px;overflow:hidden;line-height:20px;font-size:13.45px;color:#dfe1e5;white-space:pre">given_InValidOrder_When_CreateOrderRouteCalled_And_InterfaceReturns</div>
<div style="position:absolute;right:1305px;top:579.0px;height:18px;line-height:18px;font-size:12.5px;color:#6f737a;font-weight:normal;font-family:'Liberation Sans', sans-serif;white-space:pre;text-align:right;">68 ms</div>
<svg style="position:absolute;left:90.0px;top:604.0px;" width="14" height="14" viewBox="0 0 16 16" fill="none" stroke="#9da0a8" stroke-width="1.1" stroke-linecap="round" stroke-linejoin="round"><path d="M6 4l4 4-4 4"/></svg>
<svg style="position:absolute;left:109.0px;top:603.0px;" width="16" height="16" viewBox="0 0 16 16" fill="none" stroke="#5fb865" stroke-width="1.6" stroke-linecap="round" stroke-linejoin="round"><path d="M3 8.5l3.2 3L13 4.5"/></svg>
<div style="position:absolute;left:129px;top:601.5px;width:447px;height:20px;overflow:hidden;line-height:20px;font-size:13.45px;color:#dfe1e5;white-space:pre">given_ValidOrder_When_CreateOrderRouteCalled_And_RestBackendReturns</div>
<div style="position:absolute;right:1305px;top:603.0px;height:18px;line-height:18px;font-size:12.5px;color:#6f737a;font-weight:normal;font-family:'Liberation Sans', sans-serif;white-space:pre;text-align:right;">84 ms</div>
<svg style="position:absolute;left:71.0px;top:628.0px;" width="14" height="14" viewBox="0 0 16 16" fill="none" stroke="#9da0a8" stroke-width="1.1" stroke-linecap="round" stroke-linejoin="round"><path d="M4 6l4 4 4-4"/></svg>
<svg style="position:absolute;left:90.0px;top:627.0px;" width="16" height="16" viewBox="0 0 16 16" fill="none" stroke="#5fb865" stroke-width="1.6" stroke-linecap="round" stroke-linejoin="round"><path d="M3 8.5l3.2 3L13 4.5"/></svg>
<div style="position:absolute;left:110px;top:625.5px;width:459px;height:20px;overflow:hidden;line-height:20px;font-size:14px;color:#dfe1e5;white-space:pre">RestInterfaceListOrdersIntegrationTest</div>
<div style="position:absolute;right:1305px;top:627.0px;height:18px;line-height:18px;font-size:12.5px;color:#6f737a;font-weight:normal;font-family:'Liberation Sans', sans-serif;white-space:pre;text-align:right;">255 ms</div>
<svg style="position:absolute;left:90.0px;top:652.0px;" width="14" height="14" viewBox="0 0 16 16" fill="none" stroke="#9da0a8" stroke-width="1.1" stroke-linecap="round" stroke-linejoin="round"><path d="M4 6l4 4 4-4"/></svg>
<svg style="position:absolute;left:109.0px;top:651.0px;" width="16" height="16" viewBox="0 0 16 16" fill="none" stroke="#5fb865" stroke-width="1.6" stroke-linecap="round" stroke-linejoin="round"><path d="M3 8.5l3.2 3L13 4.5"/></svg>
<div style="position:absolute;left:129px;top:649.5px;width:440px;height:20px;overflow:hidden;line-height:20px;font-size:13.45px;color:#dfe1e5;white-space:pre">given_ValidQueryParameters_When_ListOrderRouteCalled_And_AllBackendAvailable</div>
<div style="position:absolute;right:1305px;top:651.0px;height:18px;line-height:18px;font-size:12.5px;color:#6f737a;font-weight:normal;font-family:'Liberation Sans', sans-serif;white-space:pre;text-align:right;">145 ms</div>
<svg style="position:absolute;left:128.0px;top:675.0px;" width="16" height="16" viewBox="0 0 16 16" fill="none" stroke="#5fb865" stroke-width="1.6" stroke-linecap="round" stroke-linejoin="round"><path d="M3 8.5l3.2 3L13 4.5"/></svg>
<div style="position:absolute;left:148px;top:673.5px;width:428px;height:20px;overflow:hidden;line-height:20px;font-size:13.8px;color:#dfe1e5;white-space:pre">[1] listorders-success-page-1-request, ONLINE, 1, 5, 5, json, application/json</div>
<div style="position:absolute;right:1305px;top:675.0px;height:18px;line-height:18px;font-size:12.5px;color:#6f737a;font-weight:normal;font-family:'Liberation Sans', sans-serif;white-space:pre;text-align:right;">55 ms</div>
<svg style="position:absolute;left:128.0px;top:699.0px;" width="16" height="16" viewBox="0 0 16 16" fill="none" stroke="#5fb865" stroke-width="1.6" stroke-linecap="round" stroke-linejoin="round"><path d="M3 8.5l3.2 3L13 4.5"/></svg>
<div style="position:absolute;left:148px;top:697.5px;width:428px;height:20px;overflow:hidden;line-height:20px;font-size:13.8px;color:#dfe1e5;white-space:pre">[2] listorders-success-page-2-request, ONLINE, 2, 5, 5, json, application/json</div>
<div style="position:absolute;right:1305px;top:699.0px;height:18px;line-height:18px;font-size:12.5px;color:#6f737a;font-weight:normal;font-family:'Liberation Sans', sans-serif;white-space:pre;text-align:right;">28 ms</div>
<svg style="position:absolute;left:128.0px;top:723.0px;" width="16" height="16" viewBox="0 0 16 16" fill="none" stroke="#5fb865" stroke-width="1.6" stroke-linecap="round" stroke-linejoin="round"><path d="M3 8.5l3.2 3L13 4.5"/></svg>
<div style="position:absolute;left:148px;top:721.5px;width:428px;height:20px;overflow:hidden;line-height:20px;font-size:13.8px;color:#dfe1e5;white-space:pre">[3] listorders-success-page-3-request, ONLINE, 3, 5, 2, json, application/json</div>
<div style="position:absolute;right:1305px;top:723.0px;height:18px;line-height:18px;font-size:12.5px;color:#6f737a;font-weight:normal;font-family:'Liberation Sans', sans-serif;white-space:pre;text-align:right;">23 ms</div>
<svg style="position:absolute;left:128.0px;top:747.0px;" width="16" height="16" viewBox="0 0 16 16" fill="none" stroke="#5fb865" stroke-width="1.6" stroke-linecap="round" stroke-linejoin="round"><path d="M3 8.5l3.2 3L13 4.5"/></svg>
<div style="position:absolute;left:148px;top:745.5px;width:428px;height:20px;overflow:hidden;line-height:20px;font-size:13.8px;color:#dfe1e5;white-space:pre">[4] listorders-success-page-4-request, ONLINE, 4, 5, 0, json, application/json</div>
<div style="position:absolute;right:1305px;top:747.0px;height:18px;line-height:18px;font-size:12.5px;color:#6f737a;font-weight:normal;font-family:'Liberation Sans', sans-serif;white-space:pre;text-align:right;">21 ms</div>
<svg style="position:absolute;left:128.0px;top:771.0px;" width="16" height="16" viewBox="0 0 16 16" fill="none" stroke="#5fb865" stroke-width="1.6" stroke-linecap="round" stroke-linejoin="round"><path d="M3 8.5l3.2 3L13 4.5"/></svg>
<div style="position:absolute;left:148px;top:769.5px;width:428px;height:20px;overflow:hidden;line-height:20px;font-size:13.8px;color:#dfe1e5;white-space:pre">[5] listorders-success-page-empty-request, WHOLESALE, 1, 5, 0, json, application/json</div>
<div style="position:absolute;right:1305px;top:771.0px;height:18px;line-height:18px;font-size:12.5px;color:#6f737a;font-weight:normal;font-family:'Liberation Sans', sans-serif;white-space:pre;text-align:right;">18 ms</div>
<svg style="position:absolute;left:90.0px;top:796.0px;" width="14" height="14" viewBox="0 0 16 16" fill="none" stroke="#9da0a8" stroke-width="1.1" stroke-linecap="round" stroke-linejoin="round"><path d="M6 4l4 4-4 4"/></svg>
<svg style="position:absolute;left:109.0px;top:795.0px;" width="16" height="16" viewBox="0 0 16 16" fill="none" stroke="#5fb865" stroke-width="1.6" stroke-linecap="round" stroke-linejoin="round"><path d="M3 8.5l3.2 3L13 4.5"/></svg>
<div style="position:absolute;left:129px;top:793.5px;width:447px;height:20px;overflow:hidden;line-height:20px;font-size:13.45px;color:#dfe1e5;white-space:pre">given_InValidQueryParameters_When_ListOrderRouteCalled_And_InterfaceReturns</div>
<div style="position:absolute;right:1305px;top:795.0px;height:18px;line-height:18px;font-size:12.5px;color:#6f737a;font-weight:normal;font-family:'Liberation Sans', sans-serif;white-space:pre;text-align:right;">63 ms</div>
<svg style="position:absolute;left:90.0px;top:820.0px;" width="14" height="14" viewBox="0 0 16 16" fill="none" stroke="#9da0a8" stroke-width="1.1" stroke-linecap="round" stroke-linejoin="round"><path d="M4 6l4 4 4-4"/></svg>
<svg style="position:absolute;left:109.0px;top:819.0px;" width="16" height="16" viewBox="0 0 16 16" fill="none" stroke="#5fb865" stroke-width="1.6" stroke-linecap="round" stroke-linejoin="round"><path d="M3 8.5l3.2 3L13 4.5"/></svg>
<div style="position:absolute;left:129px;top:817.5px;width:447px;height:20px;overflow:hidden;line-height:20px;font-size:13.45px;color:#dfe1e5;white-space:pre">given_ValidQueryParameters_When_ListOrderRouteCalled_And_RestBackendReturns</div>
<div style="position:absolute;right:1305px;top:819.0px;height:18px;line-height:18px;font-size:12.5px;color:#6f737a;font-weight:normal;font-family:'Liberation Sans', sans-serif;white-space:pre;text-align:right;">47 ms</div>
<svg style="position:absolute;left:128.0px;top:843.0px;" width="16" height="16" viewBox="0 0 16 16" fill="none" stroke="#5fb865" stroke-width="1.6" stroke-linecap="round" stroke-linejoin="round"><path d="M3 8.5l3.2 3L13 4.5"/></svg>
<div style="position:absolute;left:148px;top:841.5px;width:428px;height:20px;overflow:hidden;line-height:20px;font-size:13.8px;color:#dfe1e5;white-space:pre">[1] listorders-success-page-1-request, ONLINE, 1, 5, 5, json, application/json</div>
<div style="position:absolute;right:1305px;top:843.0px;height:18px;line-height:18px;font-size:12.5px;color:#6f737a;font-weight:normal;font-family:'Liberation Sans', sans-serif;white-space:pre;text-align:right;">16 ms</div>
<svg style="position:absolute;left:128.0px;top:867.0px;" width="16" height="16" viewBox="0 0 16 16" fill="none" stroke="#5fb865" stroke-width="1.6" stroke-linecap="round" stroke-linejoin="round"><path d="M3 8.5l3.2 3L13 4.5"/></svg>
<div style="position:absolute;left:148px;top:865.5px;width:428px;height:20px;overflow:hidden;line-height:20px;font-size:13.8px;color:#dfe1e5;white-space:pre">[2] listorders-success-page-2-request, ONLINE, 2, 5, 5, json, application/json</div>
<div style="position:absolute;right:1305px;top:867.0px;height:18px;line-height:18px;font-size:12.5px;color:#6f737a;font-weight:normal;font-family:'Liberation Sans', sans-serif;white-space:pre;text-align:right;">15 ms</div>
<svg style="position:absolute;left:128.0px;top:891.0px;" width="16" height="16" viewBox="0 0 16 16" fill="none" stroke="#5fb865" stroke-width="1.6" stroke-linecap="round" stroke-linejoin="round"><path d="M3 8.5l3.2 3L13 4.5"/></svg>
<div style="position:absolute;left:148px;top:889.5px;width:428px;height:20px;overflow:hidden;line-height:20px;font-size:13.8px;color:#dfe1e5;white-space:pre">[3] listorders-success-page-2-request, ONLINE, 3, 5, 5, json, application/json</div>
<div style="position:absolute;right:1305px;top:891.0px;height:18px;line-height:18px;font-size:12.5px;color:#6f737a;font-weight:normal;font-family:'Liberation Sans', sans-serif;white-space:pre;text-align:right;">16 ms</div>
<div style="position:absolute;left:42px;top:1007px;width:270px;height:8px;background:#46484c;border-radius:4px;"></div>
<div style="position:absolute;left:631px;top:475px;width:1246px;height:34px;background:#2b2d30;"></div>
<svg style="position:absolute;left:632.0px;top:480.0px;" width="16" height="16" viewBox="0 0 16 16" fill="none" stroke="#5fb865" stroke-width="1.6" stroke-linecap="round" stroke-linejoin="round"><path d="M3 8.5l3.2 3L13 4.5"/></svg>
<div style="position:absolute;left:652px;top:478px;height:20px;line-height:20px;font-size:13.4px;color:#dfe1e5;white-space:pre"><b style="-webkit-text-stroke:0.3px #2b2d30">Tests passed: 21</b> <span style="color:#6f737a">of 21 tests – 4 sec 151 ms</span></div>
<div style="position:absolute;left:631px;top:509px;width:1192px;height:496px;background:#1e1f22;"></div>
<div style="position:absolute;left:1824px;top:509px;width:14px;height:496px;background:#38393c;"></div>
<div style="position:absolute;left:631px;top:1005px;width:12px;height:13px;background:#1e1f22;"></div>
<div style="position:absolute;left:643px;top:1005px;width:1181px;height:13px;background:#313335;"></div>
<div style="position:absolute;left:1824px;top:1005px;width:14px;height:13px;background:#27282b;"></div>
<div style="position:absolute;left:1838px;top:475px;width:1px;height:543px;background:#1e1f22;"></div>
<div style="position:absolute;left:646px;top:1008px;width:33px;height:8px;background:#4a4c50;border-radius:4px;"></div>
<div style="position:absolute;left:631px;top:509px;width:1192px;height:496px;overflow:hidden"><div style="position:absolute;left:12.4px;top:3px;line-height:21px;font-size:12px;font-family:'Liberation Mono', monospace;color:#bcbec4;white-space:pre"><div style="height:21px">001\&quot;,\n  \&quot;message\&quot; : \&quot;Validation failed for request: 001\&quot;,\n  \&quot;details\&quot; : [ ]\n}&quot;,&quot;contextMap&quot;:{},&quot;threadName&quot;:&quot;executor-thread-1&quot;}</div><div style="height:21px">{&quot;timestamp&quot;:&quot;2025-10-11T17:36:31.461856+02:00&quot;,&quot;sequence&quot;:16470,&quot;loggerClassName&quot;:&quot;org.slf4j.impl.Slf4jLogger&quot;,&quot;loggerName&quot;:&quot;org.apache.hc.client5.http.impl.io.DefaultHttpClientConnectionOperator&quot;,&quot;level&quot;:&quot;DEBUG&quot;}</div><div style="height:21px">{&quot;timestamp&quot;:&quot;2025-10-11T17:36:31.461875+02:00&quot;,&quot;sequence&quot;:16471,&quot;loggerClassName&quot;:&quot;org.slf4j.impl.Slf4jLogger&quot;,&quot;loggerName&quot;:&quot;org.apache.hc.client5.http.impl.classic.InternalHttpClient&quot;,&quot;level&quot;:&quot;DEBUG&quot;}</div><div style="height:21px">{&quot;timestamp&quot;:&quot;2025-10-11T17:36:31.461885+02:00&quot;,&quot;sequence&quot;:16472,&quot;loggerClassName&quot;:&quot;org.slf4j.impl.Slf4jLogger&quot;,&quot;loggerName&quot;:&quot;org.apache.hc.client5.http.impl.io.PoolingHttpClientConnectionManager&quot;,&quot;level&quot;:&quot;DEBUG&quot;}</div><div style="height:21px">{&quot;timestamp&quot;:&quot;2025-10-11T17:36:31.461911+02:00&quot;,&quot;sequence&quot;:16473,&quot;loggerClassName&quot;:&quot;org.slf4j.impl.Slf4jLogger&quot;,&quot;loggerName&quot;:&quot;org.apache.hc.client5.http.headers&quot;,&quot;level&quot;:&quot;DEBUG&quot;}</div><div style="height:21px">{&quot;timestamp&quot;:&quot;2025-10-11T17:36:31.461918+02:00&quot;,&quot;sequence&quot;:16474,&quot;loggerClassName&quot;:&quot;org.slf4j.impl.Slf4jLogger&quot;,&quot;loggerName&quot;:&quot;org.apache.hc.client5.http.impl.io.DefaultHttpClientConnectionOperator&quot;,&quot;level&quot;:&quot;DEBUG&quot;}</div><div style="height:21px">{&quot;timestamp&quot;:&quot;2025-10-11T17:36:31.462874+02:00&quot;,&quot;sequence&quot;:16475,&quot;loggerClassName&quot;:&quot;org.slf4j.impl.Slf4jLogger&quot;,&quot;loggerName&quot;:&quot;org.apache.hc.client5.http.impl.classic.InternalHttpClient&quot;,&quot;level&quot;:&quot;DEBUG&quot;}</div><div style="height:21px">{&quot;timestamp&quot;:&quot;2025-10-11T17:36:31.462922+02:00&quot;,&quot;sequence&quot;:16476,&quot;loggerClassName&quot;:&quot;org.slf4j.impl.Slf4jLogger&quot;,&quot;loggerName&quot;:&quot;org.apache.hc.client5.http.impl.io.PoolingHttpClientConnectionManager&quot;,&quot;level&quot;:&quot;DEBUG&quot;}</div><div style="height:21px">{&quot;timestamp&quot;:&quot;2025-10-11T17:36:31.462937+02:00&quot;,&quot;sequence&quot;:16477,&quot;loggerClassName&quot;:&quot;org.slf4j.impl.Slf4jLogger&quot;,&quot;loggerName&quot;:&quot;org.apache.hc.client5.http.headers&quot;,&quot;level&quot;:&quot;DEBUG&quot;}</div><div style="height:21px">{&quot;timestamp&quot;:&quot;2025-10-11T17:36:31.463243+02:00&quot;,&quot;sequence&quot;:16478,&quot;loggerClassName&quot;:&quot;org.slf4j.impl.Slf4jLogger&quot;,&quot;loggerName&quot;:&quot;org.apache.hc.client5.http.impl.io.DefaultHttpClientConnectionOperator&quot;,&quot;level&quot;:&quot;DEBUG&quot;}</div><div style="height:21px">{&quot;timestamp&quot;:&quot;2025-10-11T17:36:31.463647+02:00&quot;,&quot;sequence&quot;:16479,&quot;loggerClassName&quot;:&quot;org.slf4j.impl.Slf4jLogger&quot;,&quot;loggerName&quot;:&quot;org.apache.hc.client5.http.impl.classic.InternalHttpClient&quot;,&quot;level&quot;:&quot;DEBUG&quot;}</div><div style="height:21px">{&quot;timestamp&quot;:&quot;2025-10-11T17:36:31.463724+02:00&quot;,&quot;sequence&quot;:16480,&quot;loggerClassName&quot;:&quot;org.slf4j.impl.Slf4jLogger&quot;,&quot;loggerName&quot;:&quot;org.apache.hc.client5.http.impl.io.PoolingHttpClientConnectionManager&quot;,&quot;level&quot;:&quot;DEBUG&quot;}</div><div style="height:21px">{&quot;timestamp&quot;:&quot;2025-10-11T17:36:31.463736+02:00&quot;,&quot;sequence&quot;:16481,&quot;loggerClassName&quot;:&quot;org.slf4j.impl.Slf4jLogger&quot;,&quot;loggerName&quot;:&quot;org.apache.hc.client5.http.headers&quot;,&quot;level&quot;:&quot;DEBUG&quot;}</div><div style="height:21px">{&quot;timestamp&quot;:&quot;2025-10-11T17:36:31.46375+02:00&quot;,&quot;sequence&quot;:16482,&quot;loggerClassName&quot;:&quot;org.slf4j.impl.Slf4jLogger&quot;,&quot;loggerName&quot;:&quot;org.apache.hc.client5.http.impl.io.DefaultHttpClientConnectionOperator&quot;,&quot;level&quot;:&quot;DEBUG&quot;}</div><div style="height:21px">{&quot;timestamp&quot;:&quot;2025-10-11T17:36:31.463761+02:00&quot;,&quot;sequence&quot;:16483,&quot;loggerClassName&quot;:&quot;org.slf4j.impl.Slf4jLogger&quot;,&quot;loggerName&quot;:&quot;org.apache.hc.client5.http.impl.classic.InternalHttpClient&quot;,&quot;level&quot;:&quot;DEBUG&quot;}</div><div style="height:21px">{&quot;timestamp&quot;:&quot;2025-10-11T17:36:31.463778+02:00&quot;,&quot;sequence&quot;:16484,&quot;loggerClassName&quot;:&quot;org.slf4j.impl.Slf4jLogger&quot;,&quot;loggerName&quot;:&quot;org.apache.hc.client5.http.impl.io.PoolingHttpClientConnectionManager&quot;,&quot;level&quot;:&quot;DEBUG&quot;}</div><div style="height:21px">{&quot;timestamp&quot;:&quot;2025-10-11T17:36:31.463803+02:00&quot;,&quot;sequence&quot;:16485,&quot;loggerClassName&quot;:&quot;org.slf4j.impl.Slf4jLogger&quot;,&quot;loggerName&quot;:&quot;org.apache.hc.client5.http.headers&quot;,&quot;level&quot;:&quot;DEBUG&quot;}</div><div style="height:21px">{&quot;timestamp&quot;:&quot;2025-10-11T17:36:31.463816+02:00&quot;,&quot;sequence&quot;:16486,&quot;loggerClassName&quot;:&quot;org.slf4j.impl.Slf4jLogger&quot;,&quot;loggerName&quot;:&quot;org.apache.hc.client5.http.impl.io.DefaultHttpClientConnectionOperator&quot;,&quot;level&quot;:&quot;DEBUG&quot;}</div><div style="height:21px">{&quot;timestamp&quot;:&quot;2025-10-11T17:36:31.463835+02:00&quot;,&quot;sequence&quot;:16487,&quot;loggerClassName&quot;:&quot;org.slf4j.impl.Slf4jLogger&quot;,&quot;loggerName&quot;:&quot;org.apache.hc.client5.http.impl.classic.InternalHttpClient&quot;,&quot;level&quot;:&quot;DEBUG&quot;}</div><div style="height:21px">{&quot;timestamp&quot;:&quot;2025-10-11T17:36:31.463845+02:00&quot;,&quot;sequence&quot;:16488,&quot;loggerClassName&quot;:&quot;org.slf4j.impl.Slf4jLogger&quot;,&quot;loggerName&quot;:&quot;org.apache.hc.client5.http.impl.io.PoolingHttpClientConnectionManager&quot;,&quot;level&quot;:&quot;DEBUG&quot;}</div><div style="height:21px">{&quot;timestamp&quot;:&quot;2025-10-11T17:36:31.463879+02:00&quot;,&quot;sequence&quot;:16489,&quot;loggerClassName&quot;:&quot;org.slf4j.impl.Slf4jLogger&quot;,&quot;loggerName&quot;:&quot;org.apache.hc.client5.http.impl.io.DefaultHttpClientConnectionOperator&quot;,&quot;level&quot;:&quot;DEBUG&quot;}</div><div style="height:21px">{&quot;timestamp&quot;:&quot;2025-10-11T17:36:31.463889+02:00&quot;,&quot;sequence&quot;:16490,&quot;loggerClassName&quot;:&quot;org.slf4j.impl.Slf4jLogger&quot;,&quot;loggerName&quot;:&quot;org.apache.hc.client5.http.impl.classic.InternalHttpClient&quot;,&quot;level&quot;:&quot;DEBUG&quot;}</div><div style="height:21px">{&quot;timestamp&quot;:&quot;2025-10-11T17:36:31.463898+02:00&quot;,&quot;sequence&quot;:16491,&quot;loggerClassName&quot;:&quot;org.slf4j.impl.Slf4jLogger&quot;,&quot;loggerName&quot;:&quot;org.apache.hc.client5.http.impl.io.PoolingHttpClientConnectionManager&quot;,&quot;level&quot;:&quot;DEBUG&quot;}</div><div style="height:21px">{&quot;timestamp&quot;:&quot;2025-10-11T17:36:31.463922+02:00&quot;,&quot;sequence&quot;:16492,&quot;loggerClassName&quot;:&quot;org.slf4j.impl.Slf4jLogger&quot;,&quot;loggerName&quot;:&quot;org.apache.hc.client5.http.headers&quot;,&quot;level&quot;:&quot;DEBUG&quot;}</div></div></div>
<svg style="position:absolute;left:1850.0px;top:519.0px;" width="16" height="16" viewBox="0 0 16 16" fill="none" stroke="#ced0d6" stroke-width="1.1" stroke-linecap="round" stroke-linejoin="round"><path d="M8 14V2.5M3.5 7L8 2.5 12.5 7"/></svg>
<svg style="position:absolute;left:1850.0px;top:545.0px;" width="16" height="16" viewBox="0 0 16 16" fill="none" stroke="#ced0d6" stroke-width="1.1" stroke-linecap="round" stroke-linejoin="round"><path d="M8 2v11.5M3.5 9L8 13.5 12.5 9"/></svg>
<svg style="position:absolute;left:1850.0px;top:572.0px;" width="16" height="16" viewBox="0 0 16 16" fill="none" stroke="#ced0d6" stroke-width="1.1" stroke-linecap="round" stroke-linejoin="round"><path d="M2 3h12M2 8h10a2 2 0 0 1 0 4H8M9.5 10.5L8 12l1.5 1.5M2 13h3"/></svg>
<svg style="position:absolute;left:1850.0px;top:597.0px;" width="16" height="16" viewBox="0 0 16 16" fill="none" stroke="#ced0d6" stroke-width="1.1" stroke-linecap="round" stroke-linejoin="round"><path d="M2 3h6M2 7h6M2 11h6M2 14.5h12M12 3v8M10 9l2 2 2-2"/></svg>
<svg style="position:absolute;left:1850.0px;top:623.0px;" width="16" height="16" viewBox="0 0 16 16" fill="none" stroke="#ced0d6" stroke-width="1.1" stroke-linecap="round" stroke-linejoin="round"><rect x="4" y="2" width="8" height="4"/><rect x="2" y="6" width="12" height="6" rx="1"/><rect x="4" y="10" width="8" height="4"/></svg>
<svg style="position:absolute;left:1850.0px;top:649.0px;" width="16" height="16" viewBox="0 0 16 16" fill="none" stroke="#ced0d6" stroke-width="1.1" stroke-linecap="round" stroke-linejoin="round"><path d="M2.5 4h11M6 4V2.5h4V4M4 4l.8 10h6.4L12 4M6.5 6.5v5M9.5 6.5v5"/></svg>
<div style="position:absolute;left:12px;top:1030px;width:9px;height:9px;background:#1f2a44;border:1.4px solid #548af7;border-radius:2px;"></div>
<div style="position:absolute;left:24px;top:1022.5px;height:21px;line-height:21px;font-size:14px;color:#a8abb1;font-weight:normal;font-family:'Liberation Sans', sans-serif;white-space:pre;">camelbee.test.service</div>
<div style="position:absolute;left:184px;top:1022.5px;height:21px;line-height:21px;font-size:14px;color:#a8abb1;font-weight:normal;font-family:'Liberation Sans', sans-serif;white-space:pre;">src</div>
<div style="position:absolute;left:227px;top:1022.5px;height:21px;line-height:21px;font-size:14px;color:#a8abb1;font-weight:normal;font-family:'Liberation Sans', sans-serif;white-space:pre;">integration-test</div>
<div style="position:absolute;left:347px;top:1022.5px;height:21px;line-height:21px;font-size:14px;color:#a8abb1;font-weight:normal;font-family:'Liberation Sans', sans-serif;white-space:pre;">java</div>
<div style="position:absolute;left:397px;top:1022.5px;height:21px;line-height:21px;font-size:14px;color:#a8abb1;font-weight:normal;font-family:'Liberation Sans', sans-serif;white-space:pre;">com</div>
<div style="position:absolute;left:448px;top:1022.5px;height:21px;line-height:21px;font-size:14px;color:#a8abb1;font-weight:normal;font-family:'Liberation Sans', sans-serif;white-space:pre;">mycompany</div>
<div style="position:absolute;left:547px;top:1022.5px;height:21px;line-height:21px;font-size:14px;color:#a8abb1;font-weight:normal;font-family:'Liberation Sans', sans-serif;white-space:pre;">itest</div>
<div style="position:absolute;left:598px;top:1022.5px;height:21px;line-height:21px;font-size:14px;color:#a8abb1;font-weight:normal;font-family:'Liberation Sans', sans-serif;white-space:pre;">rest</div>
<svg style="position:absolute;left:165.0px;top:1026.0px;" width="14" height="14" viewBox="0 0 16 16" fill="none" stroke="#a8abb1" stroke-width="1.2" stroke-linecap="round" stroke-linejoin="round"><path d="M6 4l4 4-4 4"/></svg>
<svg style="position:absolute;left:208.0px;top:1026.0px;" width="14" height="14" viewBox="0 0 16 16" fill="none" stroke="#a8abb1" stroke-width="1.2" stroke-linecap="round" stroke-linejoin="round"><path d="M6 4l4 4-4 4"/></svg>
<svg style="position:absolute;left:328.0px;top:1026.0px;" width="14" height="14" viewBox="0 0 16 16" fill="none" stroke="#a8abb1" stroke-width="1.2" stroke-linecap="round" stroke-linejoin="round"><path d="M6 4l4 4-4 4"/></svg>
<svg style="position:absolute;left:378.0px;top:1026.0px;" width="14" height="14" viewBox="0 0 16 16" fill="none" stroke="#a8abb1" stroke-width="1.2" stroke-linecap="round" stroke-linejoin="round"><path d="M6 4l4 4-4 4"/></svg>
<svg style="position:absolute;left:428.0px;top:1026.0px;" width="14" height="14" viewBox="0 0 16 16" fill="none" stroke="#a8abb1" stroke-width="1.2" stroke-linecap="round" stroke-linejoin="round"><path d="M6 4l4 4-4 4"/></svg>
<svg style="position:absolute;left:528.0px;top:1026.0px;" width="14" height="14" viewBox="0 0 16 16" fill="none" stroke="#a8abb1" stroke-width="1.2" stroke-linecap="round" stroke-linejoin="round"><path d="M6 4l4 4-4 4"/></svg>
<svg style="position:absolute;left:578.0px;top:1026.0px;" width="14" height="14" viewBox="0 0 16 16" fill="none" stroke="#a8abb1" stroke-width="1.2" stroke-linecap="round" stroke-linejoin="round"><path d="M6 4l4 4-4 4"/></svg>
<svg style="position:absolute;left:626.0px;top:1026.0px;" width="14" height="14" viewBox="0 0 16 16" fill="none" stroke="#a8abb1" stroke-width="1.2" stroke-linecap="round" stroke-linejoin="round"><path d="M6 4l4 4-4 4"/></svg>
<svg style="position:absolute;left:647px;top:1025px;" width="16" height="16" viewBox="0 0 16 16" fill="none"><path d="M11.5 2.7A6.3 6.3 0 1 0 14.3 8" stroke="#548af7" stroke-width="1.3"/><path d="M10.2 6.2a2.6 2.6 0 1 0 0 3.6" stroke="#548af7" stroke-width="1.3"/><path d="M11.3 0L8.6 3.2l2.7 3.2z" fill="#e55765"/><path d="M12.3 0l2.9 3.2-2.9 3.2z" fill="#5fb865"/></svg>
<div style="position:absolute;left:666px;top:1022.5px;height:21px;line-height:21px;font-size:14px;color:#a8abb1;font-weight:normal;font-family:'Liberation Sans', sans-serif;white-space:pre;">RestInterfaceCreateOrderIntegrationTest</div>
<div style="position:absolute;left:1642px;top:1022.5px;height:21px;line-height:21px;font-size:14px;color:#a8abb1;font-weight:normal;font-family:'Liberation Sans', sans-serif;white-space:pre;">34:95</div>
<div style="position:absolute;left:1694px;top:1022.5px;height:21px;line-height:21px;font-size:14px;color:#a8abb1;font-weight:normal;font-family:'Liberation Sans', sans-serif;white-space:pre;">LF</div>
<div style="position:absolute;left:1725px;top:1022.5px;height:21px;line-height:21px;font-size:14px;color:#a8abb1;font-weight:normal;font-family:'Liberation Sans', sans-serif;white-space:pre;">UTF-8</div>
<div style="position:absolute;left:1781px;top:1022.5px;height:21px;line-height:21px;font-size:14px;color:#a8abb1;font-weight:normal;font-family:'Liberation Sans', sans-serif;white-space:pre;">2 spaces</div>
<svg style="position:absolute;left:1853.0px;top:1025.0px;" width="16" height="16" viewBox="0 0 16 16" fill="none" stroke="#ced0d6" stroke-width="1.2" stroke-linecap="round" stroke-linejoin="round"><rect x="2.5" y="7.5" width="9" height="6.5" rx="1"/><path d="M9 7.5V5a2.5 2.5 0 0 1 5 0v1"/><circle cx="7" cy="10.8" r=".6"/></svg>
<div style="position:absolute;left:1884px;top:1026px;width:14px;height:14px;border-radius:7px;background:#e55765;color:#fff;font-size:10px;line-height:14px;text-align:center;font-weight:bold">!</div>
<div style="position:absolute;left:935px;top:292px;width:917px;height:645px;border-radius:10px;overflow:hidden;background:#fff;box-shadow:0 0 0 0.5px rgba(0,0,0,.6),0 10px 40px rgba(0,0,0,.55);font-family:'Liberation Sans', sans-serif">
<div style="position:absolute;left:0px;top:0px;width:917px;height:64px;background:linear-gradient(90deg,#0045c0 0%,#0050d8 60%,#0a58e2 100%);"></div>
<div style="position:absolute;left:0px;top:0px;width:917px;height:1px;background:rgba(255,255,255,0.32);"></div>
<div style="position:absolute;left:11px;top:27px;width:12px;height:12px;background:#fe5f57;border-radius:6px;"></div>
<div style="position:absolute;left:31px;top:27px;width:12px;height:12px;background:#febc2e;border-radius:6px;"></div>
<div style="position:absolute;left:51px;top:27px;width:12px;height:12px;background:#28c840;border-radius:6px;"></div>
<svg style="position:absolute;left:75px;top:13px;" width="36" height="31" viewBox="0 0 36 31" fill="none"><g fill="#fff"><rect x="5" y="14.8" width="2.85" height="2.9"/><rect x="9" y="14.8" width="2.85" height="2.9"/><rect x="13" y="14.8" width="2.85" height="2.9"/><rect x="17" y="14.8" width="2.9" height="2.9"/><rect x="21.2" y="14.8" width="2.85" height="2.9"/><rect x="9" y="10.8" width="2.85" height="2.95"/><rect x="13" y="10.8" width="2.85" height="2.95"/><rect x="17" y="10.8" width="2.9" height="2.95"/><rect x="17" y="7" width="2.9" height="2.85"/><path d="M5 18.8H25.6C25.4 17 25.6 14.5 26.4 12.4L28.6 15.6 33.3 16.5C31.8 18 29.8 18.7 27.8 18.9 25.2 25 19.5 29 13 29 8 29 5.2 25 5 18.8z"/></g></svg>
<div style="position:absolute;left:111px;top:16.0px;height:32px;line-height:32px;font-size:21.5px;color:#fff;font-weight:normal;white-space:pre;letter-spacing:-0.25px;">docker</div>
<div style="position:absolute;left:175.5px;top:37.5px;width:2.5px;height:2.5px;background:transparent;border:0.7px solid #fff;border-radius:2px;opacity:.8"></div>
<div style="position:absolute;left:180px;top:16.0px;height:32px;line-height:32px;font-size:21.5px;color:#fff;font-weight:normal;white-space:pre;letter-spacing:0px;">desktop</div>
<div style="position:absolute;left:265px;top:25px;width:60px;height:16px;background:#dbe8fc;border-radius:8px;"></div>
<div style="position:absolute;left:265px;top:25.0px;height:16px;line-height:16px;font-size:9.4px;color:#0b3ea8;font-weight:bold;white-space:pre;width:60px;text-align:center;letter-spacing:0.2px;">PERSONAL</div>
<svg style="position:absolute;left:582.0px;top:22.0px" width="20" height="20" viewBox="0 0 24 24" fill="none" stroke="#fff" stroke-width="2" stroke-linecap="round" stroke-linejoin="round"><circle cx="10.5" cy="10.5" r="7"/><path d="M15.5 15.5L21 21"/></svg>
<svg style="position:absolute;left:626.0px;top:22.0px" width="20" height="20" viewBox="0 0 24 24" fill="none" stroke="#fff" stroke-width="1.8" stroke-linecap="round" stroke-linejoin="round"><circle cx="12" cy="12" r="9.5"/><path d="M9.3 9.3a2.8 2.8 0 1 1 3.9 2.6c-.8.4-1.2 1-1.2 1.8v.5"/><circle cx="12" cy="17" r=".6" fill="#fff"/></svg>
<svg style="position:absolute;left:670px;top:22px;" width="20" height="20" viewBox="0 0 20 20" fill="none"><path d="M4 15V9.5a6 6 0 0 1 12 0V15l1.5 1.5h-15z" fill="#fff"/><rect x="8" y="17.5" width="4" height="1.6" rx=".8" fill="#fff"/></svg>
<div style="position:absolute;left:680px;top:12px;width:20px;height:20px;background:#d8232a;border-radius:10px;"></div>
<div style="position:absolute;left:680px;top:12.0px;height:20px;line-height:20px;font-size:11px;color:#fff;font-weight:bold;white-space:pre;width:20px;text-align:center;">3</div>
<svg style="position:absolute;left:714.0px;top:22.0px" width="20" height="20" viewBox="0 0 24 24" fill="none" stroke="#fff" stroke-width="1.8" stroke-linecap="round" stroke-linejoin="round"><path d="M2.5 8.5L12 4l9.5 4.5L12 13z"/><path d="M6 10.5v5.5c1.5 1.5 3.5 2.5 6 2.5s4.5-1 6-2.5v-5.5"/><path d="M21.5 8.5v5"/></svg>
<svg style="position:absolute;left:757.5px;top:21.5px" width="21" height="21" viewBox="0 0 24 24" fill="none" stroke="#fff" stroke-width="1.8" stroke-linecap="round" stroke-linejoin="round"><circle cx="12" cy="12" r="3"/><path d="M19.19 10.74 L21.45 11.03 L21.45 12.97 L19.19 13.26 L17.97 16.20 L19.37 18.00 L18.00 19.37 L16.20 17.97 L13.26 19.19 L12.97 21.45 L11.03 21.45 L10.74 19.19 L7.80 17.97 L6.00 19.37 L4.63 18.00 L6.03 16.20 L4.81 13.26 L2.55 12.97 L2.55 11.03 L4.81 10.74 L6.03 7.80 L4.63 6.00 L6.00 4.63 L7.80 6.03 L10.74 4.81 L11.03 2.55 L12.97 2.55 L13.26 4.81 L16.20 6.03 L18.00 4.63 L19.37 6.00 L17.97 7.80z"/></svg>
<div style="position:absolute;left:801.5px;top:24.0px;width:3px;height:3px;background:#fff;border-radius:1px;transform:rotate(45deg);"></div>
<div style="position:absolute;left:801.5px;top:31.0px;width:3px;height:3px;background:#fff;border-radius:1px;transform:rotate(45deg);"></div>
<div style="position:absolute;left:801.5px;top:38.0px;width:3px;height:3px;background:#fff;border-radius:1px;transform:rotate(45deg);"></div>
<div style="position:absolute;left:808.5px;top:24.0px;width:3px;height:3px;background:#fff;border-radius:1px;transform:rotate(45deg);"></div>
<div style="position:absolute;left:808.5px;top:31.0px;width:3px;height:3px;background:#fff;border-radius:1px;transform:rotate(45deg);"></div>
<div style="position:absolute;left:808.5px;top:38.0px;width:3px;height:3px;background:#fff;border-radius:1px;transform:rotate(45deg);"></div>
<div style="position:absolute;left:815.5px;top:24.0px;width:3px;height:3px;background:#fff;border-radius:1px;transform:rotate(45deg);"></div>
<div style="position:absolute;left:815.5px;top:31.0px;width:3px;height:3px;background:#fff;border-radius:1px;transform:rotate(45deg);"></div>
<div style="position:absolute;left:815.5px;top:38.0px;width:3px;height:3px;background:#fff;border-radius:1px;transform:rotate(45deg);"></div>
<div style="position:absolute;left:834px;top:16px;width:75px;height:32px;background:#fff;border-radius:5px;"></div>
<div style="position:absolute;left:834px;top:22.0px;height:20px;line-height:20px;font-size:13.8px;color:#000;font-weight:normal;white-space:pre;width:75px;text-align:center;-webkit-text-stroke:0.45px #000;">Sign in</div>
<div style="position:absolute;left:0px;top:64px;width:917px;height:51px;background:#002e85;border-radius:5px;"></div>
<svg style="position:absolute;left:17.0px;top:77.0px" width="22" height="22" viewBox="0 0 24 24" fill="none" stroke="#2f7bff" stroke-width="1.8" stroke-linecap="round" stroke-linejoin="round"><circle cx="12" cy="7.5" r="4"/><path d="M3 21c2-4 5.5-6 9-6s7 2 9 6"/></svg>
<div style="position:absolute;left:52px;top:75.5px;height:21px;line-height:21px;font-size:14.3px;color:#fff;font-weight:normal;white-space:pre;letter-spacing:0.2px;-webkit-text-stroke:0.45px #fff;">To access the latest features, sign in</div>
<svg style="position:absolute;left:883.0px;top:81.0px" width="16" height="16" viewBox="0 0 24 24" fill="none" stroke="#fff" stroke-width="2" stroke-linecap="round" stroke-linejoin="round"><path d="M5 5l14 14M19 5L5 19"/></svg>
<div style="position:absolute;left:0px;top:115px;width:89px;height:498px;background:#f6f7f8;"></div>
<div style="position:absolute;left:16px;top:163px;width:56px;height:32px;background:#d7d9dc;border-radius:5px;"></div>
<svg style="position:absolute;left:34.5px;top:137.5px" width="17" height="17" viewBox="0 0 24 24" fill="none" stroke="#3b4655" stroke-width="1.7" stroke-linecap="round" stroke-linejoin="round"><path d="M8 3l1.3 3.7L13 8l-3.7 1.3L8 13l-1.3-3.7L3 8l3.7-1.3zM16.5 14l1 2.5 2.5 1-2.5 1-1 2.5-1-2.5-2.5-1 2.5-1z"/><path d="M17 3.5v4M15 5.5h4M6 16v4M4 18h4"/></svg>
<svg style="position:absolute;left:34.5px;top:169.5px" width="17" height="17" viewBox="0 0 24 24" fill="none" stroke="#3b4655" stroke-width="1.8" stroke-linecap="round" stroke-linejoin="round"><path d="M12 2.5l8.5 4.5v10L12 21.5 3.5 17V7z"/><path d="M3.5 7L12 11.5 20.5 7M12 11.5v10"/></svg>
<svg style="position:absolute;left:34.5px;top:202.5px" width="17" height="17" viewBox="0 0 24 24" fill="none" stroke="#3b4655" stroke-width="1.8" stroke-linecap="round" stroke-linejoin="round"><circle cx="12" cy="12" r="8.5" stroke-dasharray="3.5 2.5"/><path d="M8.5 10l3.5 2 3.5-2M12 12v4"/></svg>
<svg style="position:absolute;left:34.5px;top:234.5px" width="17" height="17" viewBox="0 0 24 24" fill="none" stroke="#3b4655" stroke-width="1.8" stroke-linecap="round" stroke-linejoin="round"><path d="M3 13l3-8h12l3 8v6H3z"/><path d="M3 13h18M7 16.5h1"/></svg>
<svg style="position:absolute;left:34.5px;top:266.5px" width="17" height="17" viewBox="0 0 24 24" fill="none" stroke="#3b4655" stroke-width="1.8" stroke-linecap="round" stroke-linejoin="round"><path d="M14.5 3.5a5 5 0 0 0-4.7 6.7L3 17l3.5 3.5 6.8-6.8a5 5 0 0 0 6.7-4.7l-3 3-3.5-3.5z"/></svg>
<div style="position:absolute;left:16px;top:299px;width:56px;height:1px;background:#e1e3e6;"></div>
<svg style="position:absolute;left:34.5px;top:314.5px" width="17" height="17" viewBox="0 0 24 24" fill="none" stroke="#3b4655" stroke-width="1.8" stroke-linecap="round" stroke-linejoin="round"><path d="M4 3h16v13l-8 5-8-5z"/><path d="M12 7l1.2 2.8L16 11l-2.8 1.2L12 15l-1.2-2.8L8 11l2.8-1.2z"/></svg>
<svg style="position:absolute;left:34.5px;top:347.5px" width="17" height="17" viewBox="0 0 24 24" fill="none" stroke="#3b4655" stroke-width="1.8" stroke-linecap="round" stroke-linejoin="round"><path d="M5 20L15 10M12 5l7 7M14 3l7 7M4 13l3 3"/><path d="M18 17l1 2 2 1-2 1-1 2"/></svg>
<div style="position:absolute;left:16px;top:380px;width:56px;height:1px;background:#e1e3e6;"></div>
<svg style="position:absolute;left:34.5px;top:395.5px" width="17" height="17" viewBox="0 0 24 24" fill="none" stroke="#3b4655" stroke-width="1.8" stroke-linecap="round" stroke-linejoin="round"><circle cx="12" cy="12" r="9"/><path d="M5 8c3 0 4 2 4 4s2 3 4 3 2 3 1 5M14 4c0 2 2 3 4 3"/></svg>
<svg style="position:absolute;left:34.5px;top:427.5px" width="17" height="17" viewBox="0 0 24 24" fill="none" stroke="#3b4655" stroke-width="2" stroke-linecap="round" stroke-linejoin="round"><circle cx="12" cy="12" r="4" fill="#3b4655"/><path d="M4 4l3 3M20 4l-3 3M4 20l3-3M20 20l-3-3"/></svg>
<div style="position:absolute;left:16px;top:461px;width:56px;height:1px;background:#e1e3e6;"></div>
<svg style="position:absolute;left:34.5px;top:477.5px" width="17" height="17" viewBox="0 0 24 24" fill="none" stroke="#3b4655" stroke-width="1.8" stroke-linecap="round" stroke-linejoin="round"><path d="M8 4h3a2 2 0 0 1 4 0h3v5a2 2 0 0 1 0 4v5h-4a2 2 0 0 0-4 0H6v-4a2 2 0 0 0 0-4V4z"/></svg>
<div style="position:absolute;left:121px;top:141.0px;height:30px;line-height:30px;font-size:20px;color:#000;font-weight:bold;white-space:pre;letter-spacing:-0.3px;">Containers</div>
<div style="position:absolute;left:239px;top:150.0px;height:18px;line-height:18px;font-size:12.3px;color:#1d63ed;font-weight:normal;white-space:pre;text-decoration:underline;">Give feedback</div>
<svg style="position:absolute;left:321.0px;top:152.0px" width="14" height="14" viewBox="0 0 24 24" fill="none" stroke="#1d63ed" stroke-width="2" stroke-linecap="round" stroke-linejoin="round"><path d="M3 4h12v8H8l-3 3v-3H3z"/><path d="M9 15h7l3 3v-3h2V8h-3"/></svg>
<div style="position:absolute;left:121px;top:174.5px;height:21px;line-height:21px;font-size:14.6px;color:#505d6d;font-weight:normal;white-space:pre;">View all your running containers and applications.</div>
<div style="position:absolute;left:447px;top:174.5px;height:21px;line-height:21px;font-size:14.4px;color:#1d63ed;font-weight:normal;white-space:pre;text-decoration:underline;">Learn more</div>
<svg style="position:absolute;left:524.0px;top:179.0px" width="14" height="14" viewBox="0 0 24 24" fill="none" stroke="#1d63ed" stroke-width="2.2" stroke-linecap="round" stroke-linejoin="round"><path d="M14 4h6v6M20 4l-9 9M18 14v6H4V6h6"/></svg>
<div style="position:absolute;left:137px;top:244.0px;height:18px;line-height:18px;font-size:12.2px;color:#17191c;font-weight:normal;white-space:pre;">Container CPU usage</div>
<svg style="position:absolute;left:264.0px;top:244.0px" width="18" height="18" viewBox="0 0 24 24" fill="none" stroke="#a9adb3" stroke-width="1.5" stroke-linecap="round" stroke-linejoin="round"><circle cx="12" cy="12" r="10"/><path d="M12 11v6M12 7.5v.5"/></svg>
<div style="position:absolute;left:137px;top:269.0px;height:22px;line-height:22px;font-size:15.3px;color:#4d5a6b;font-weight:normal;white-space:pre;"><span style="color:#15766a;-webkit-text-stroke:0.35px #15766a">32.17%</span><span style="-webkit-text-stroke:0.35px #4d5a6b"> / 1000%</span> <span style="font-size:12.3px;font-weight:normal">(10 CPUs available)</span></div>
<div style="position:absolute;left:505px;top:244.0px;height:18px;line-height:18px;font-size:12.2px;color:#17191c;font-weight:normal;white-space:pre;">Container memory usage</div>
<svg style="position:absolute;left:654.0px;top:244.0px" width="18" height="18" viewBox="0 0 24 24" fill="none" stroke="#a9adb3" stroke-width="1.5" stroke-linecap="round" stroke-linejoin="round"><circle cx="12" cy="12" r="10"/><path d="M12 11v6M12 7.5v.5"/></svg>
<div style="position:absolute;left:505px;top:269.0px;height:22px;line-height:22px;font-size:15.3px;color:#4d5a6b;font-weight:normal;white-space:pre;-webkit-text-stroke:0.35px currentColor;"><span style="color:#15766a">708.91MB</span> / 7.47GB</div>
<div style="position:absolute;left:779px;top:243.5px;height:19px;line-height:19px;font-size:13.3px;color:#1d63ed;font-weight:bold;white-space:pre;">Show charts</div>
<div style="position:absolute;left:121px;top:320px;width:188px;height:37px;background:#fff;border:1px solid #c5cad1;border-radius:4px;"></div>
<svg style="position:absolute;left:135.5px;top:329.5px" width="19" height="19" viewBox="0 0 24 24" fill="none" stroke="#1c1f24" stroke-width="2" stroke-linecap="round" stroke-linejoin="round"><circle cx="10.5" cy="10.5" r="7"/><path d="M15.5 15.5L20 20"/></svg>
<div style="position:absolute;left:167px;top:328.0px;height:22px;line-height:22px;font-size:14.8px;color:#9ca3ab;font-weight:normal;white-space:pre;">Search</div>
<div style="position:absolute;left:335px;top:329px;width:20px;height:20px;background:#fff;border:2px solid #1d63ed;border-radius:4px;"></div>
<div style="position:absolute;left:341px;top:331px;width:2px;height:16px;background:#1d63ed;"></div>
<div style="position:absolute;left:347px;top:331px;width:2px;height:16px;background:#1d63ed;"></div>
<div style="position:absolute;left:393px;top:334px;width:30px;height:11px;background:#c5cad2;border-radius:6px;"></div>
<div style="position:absolute;left:392px;top:330px;width:18px;height:18px;background:#6b7789;border-radius:9px;"></div>
<div style="position:absolute;left:437px;top:328.5px;height:21px;line-height:21px;font-size:14.3px;color:#4d5a6b;font-weight:normal;white-space:pre;">Only running</div>
<div style="position:absolute;left:138px;top:382px;width:16px;height:16px;background:#fff;border:2px solid #6c7a8c;border-radius:3px;"></div>
<div style="position:absolute;left:255px;top:380.0px;height:20px;line-height:20px;font-size:13.8px;color:#000;font-weight:bold;white-space:pre;">Name</div>
<div style="position:absolute;left:612px;top:380.0px;height:20px;line-height:20px;font-size:13.5px;color:#000;font-weight:bold;white-space:pre;">Container ID</div>
<div style="position:absolute;left:722px;top:380.0px;height:20px;line-height:20px;font-size:13.4px;color:#000;font-weight:bold;white-space:pre;">Actions</div>
<div style="position:absolute;left:711px;top:371px;width:1px;height:200px;background:#e1e3e6;"></div>
<div style="position:absolute;left:121px;top:410px;width:752px;height:1px;background:#e1e3e6;"></div>
<div style="position:absolute;left:121px;top:450px;width:752px;height:1px;background:#e1e3e6;"></div>
<div style="position:absolute;left:121px;top:490px;width:752px;height:1px;background:#e1e3e6;"></div>
<div style="position:absolute;left:121px;top:531px;width:752px;height:1px;background:#e1e3e6;"></div>
<div style="position:absolute;left:121px;top:570px;width:752px;height:2px;background:#e1e3e6;"></div>
<div style="position:absolute;left:138px;top:422px;width:16px;height:16px;background:#fff;border:2px solid #6c7a8c;border-radius:3px;"></div>
<div style="position:absolute;left:214.5px;top:424.5px;width:11px;height:11px;background:#147a6b;border-radius:6px;"></div>
<div style="position:absolute;left:253px;top:419.5px;height:21px;line-height:21px;font-size:14.6px;color:#1a1c1f;font-weight:normal;white-space:pre;">testcontainers-ryuk-cb275cbd-f9e2-41f5-a22a-dd26d6</div>
<div style="position:absolute;left:610px;top:419.5px;height:21px;line-height:21px;font-size:14.6px;color:#1a1c1f;font-weight:normal;white-space:pre;">3c36153f595c</div>
<div style="position:absolute;left:725.5px;top:421.5px;width:17px;height:17px;background:#0a52e3;border-radius:3px;"></div>
<div style="position:absolute;left:776.3px;top:422.29999999999995px;width:3.4px;height:3.4px;background:#1d63ed;border-radius:2px;"></div>
<div style="position:absolute;left:776.3px;top:428.29999999999995px;width:3.4px;height:3.4px;background:#1d63ed;border-radius:2px;"></div>
<div style="position:absolute;left:776.3px;top:434.29999999999995px;width:3.4px;height:3.4px;background:#1d63ed;border-radius:2px;"></div>
<div style="position:absolute;left:812px;top:419px;width:1px;height:22px;background:#e1e3e6;"></div>
<svg style="position:absolute;left:837.5px;top:420.5px" width="19" height="19" viewBox="0 0 24 24" fill="none" stroke="#e0222f" stroke-width="2" stroke-linecap="round" stroke-linejoin="round"><path d="M3.5 6h17M9 6V3.5h6V6M5.5 6l1 15h11l1-15M10 10v7M14 10v7"/></svg>
<div style="position:absolute;left:138px;top:462px;width:16px;height:16px;background:#fff;border:2px solid #6c7a8c;border-radius:3px;"></div>
<div style="position:absolute;left:214.5px;top:464.5px;width:11px;height:11px;background:#fff;border:1.3px solid #6c7a8c;border-radius:6px;"></div>
<div style="position:absolute;left:253px;top:459.5px;height:21px;line-height:21px;font-size:14.6px;color:#3d4652;font-weight:normal;white-space:pre;">pensive_ritchie</div>
<div style="position:absolute;left:610px;top:459.5px;height:21px;line-height:21px;font-size:14.6px;color:#3d4652;font-weight:normal;white-space:pre;">024a605d5efc</div>
<svg style="position:absolute;left:724.0px;top:460.0px" width="20" height="20" viewBox="0 0 24 24" fill="none" stroke="#1d63ed" stroke-width="1.8" stroke-linecap="round" stroke-linejoin="round"><path d="M6 3.5v17l14-8.5z"/></svg>
<div style="position:absolute;left:776.3px;top:462.29999999999995px;width:3.4px;height:3.4px;background:#1d63ed;border-radius:2px;"></div>
<div style="position:absolute;left:776.3px;top:468.29999999999995px;width:3.4px;height:3.4px;background:#1d63ed;border-radius:2px;"></div>
<div style="position:absolute;left:776.3px;top:474.29999999999995px;width:3.4px;height:3.4px;background:#1d63ed;border-radius:2px;"></div>
<div style="position:absolute;left:812px;top:459px;width:1px;height:22px;background:#e1e3e6;"></div>
<svg style="position:absolute;left:837.5px;top:460.5px" width="19" height="19" viewBox="0 0 24 24" fill="none" stroke="#e0222f" stroke-width="2" stroke-linecap="round" stroke-linejoin="round"><path d="M3.5 6h17M9 6V3.5h6V6M5.5 6l1 15h11l1-15M10 10v7M14 10v7"/></svg>
<div style="position:absolute;left:138px;top:503px;width:16px;height:16px;background:#fff;border:2px solid #6c7a8c;border-radius:3px;"></div>
<div style="position:absolute;left:214.5px;top:505.5px;width:11px;height:11px;background:#147a6b;border-radius:6px;"></div>
<div style="position:absolute;left:253px;top:500.5px;height:21px;line-height:21px;font-size:14.6px;color:#1a1c1f;font-weight:normal;white-space:pre;">testcontainers-socat-Vqdt7KQb</div>
<div style="position:absolute;left:610px;top:500.5px;height:21px;line-height:21px;font-size:14.6px;color:#1a1c1f;font-weight:normal;white-space:pre;">3909ee09b1c3</div>
<div style="position:absolute;left:725.5px;top:502.5px;width:17px;height:17px;background:#0a52e3;border-radius:3px;"></div>
<div style="position:absolute;left:776.3px;top:503.29999999999995px;width:3.4px;height:3.4px;background:#1d63ed;border-radius:2px;"></div>
<div style="position:absolute;left:776.3px;top:509.29999999999995px;width:3.4px;height:3.4px;background:#1d63ed;border-radius:2px;"></div>
<div style="position:absolute;left:776.3px;top:515.3px;width:3.4px;height:3.4px;background:#1d63ed;border-radius:2px;"></div>
<div style="position:absolute;left:812px;top:500px;width:1px;height:22px;background:#e1e3e6;"></div>
<svg style="position:absolute;left:837.5px;top:501.5px" width="19" height="19" viewBox="0 0 24 24" fill="none" stroke="#e0222f" stroke-width="2" stroke-linecap="round" stroke-linejoin="round"><path d="M3.5 6h17M9 6V3.5h6V6M5.5 6l1 15h11l1-15M10 10v7M14 10v7"/></svg>
<div style="position:absolute;left:138px;top:543px;width:16px;height:16px;background:#fff;border:2px solid #6c7a8c;border-radius:3px;"></div>
<div style="position:absolute;left:214.5px;top:545.5px;width:11px;height:11px;background:#147a6b;border-radius:6px;"></div>
<div style="position:absolute;left:253px;top:540.5px;height:21px;line-height:21px;font-size:14.6px;color:#1a1c1f;font-weight:normal;white-space:pre;text-decoration:underline dotted #6c7a8c;text-underline-offset:4px;">pxmyjr5ztkbo</div>
<div style="position:absolute;left:610px;top:540.5px;height:21px;line-height:21px;font-size:14.6px;color:#1a1c1f;font-weight:normal;white-space:pre;">-</div>
<svg style="position:absolute;left:175.0px;top:543.0px" width="16" height="16" viewBox="0 0 24 24" fill="none" stroke="#1d63ed" stroke-width="2.2" stroke-linecap="round" stroke-linejoin="round"><path d="M9 5l7 7-7 7"/></svg>
<div style="position:absolute;left:725.5px;top:542.5px;width:17px;height:17px;background:#0a52e3;border-radius:3px;"></div>
<div style="position:absolute;left:776.3px;top:543.3px;width:3.4px;height:3.4px;background:#1d63ed;border-radius:2px;"></div>
<div style="position:absolute;left:776.3px;top:549.3px;width:3.4px;height:3.4px;background:#1d63ed;border-radius:2px;"></div>
<div style="position:absolute;left:776.3px;top:555.3px;width:3.4px;height:3.4px;background:#1d63ed;border-radius:2px;"></div>
<div style="position:absolute;left:812px;top:540px;width:1px;height:22px;background:#e1e3e6;"></div>
<svg style="position:absolute;left:837.5px;top:541.5px" width="19" height="19" viewBox="0 0 24 24" fill="none" stroke="#e0222f" stroke-width="2" stroke-linecap="round" stroke-linejoin="round"><path d="M3.5 6h17M9 6V3.5h6V6M5.5 6l1 15h11l1-15M10 10v7M14 10v7"/></svg>
<div style="position:absolute;left:365px;top:462px;width:56px;height:16px;background:#fdf0e2;border-radius:8px;"></div>
<svg style="position:absolute;left:368.0px;top:464.0px" width="12" height="12" viewBox="0 0 24 24" fill="none" stroke="#c2511f" stroke-width="2.2" stroke-linecap="round" stroke-linejoin="round"><path d="M12 3L2 20.5h20z"/><path d="M12 10v5M12 17.5v.3"/></svg>
<div style="position:absolute;left:383px;top:462.0px;height:16px;line-height:16px;font-size:11.2px;color:#c2511f;font-weight:normal;white-space:pre;">AMD64</div>
<div style="position:absolute;left:765px;top:586.5px;height:21px;line-height:21px;font-size:14.6px;color:#1a1c1f;font-weight:normal;white-space:pre;">Showing 4 items</div>
<div style="position:absolute;left:0px;top:613px;width:917px;height:32px;background:#f5f6f7;"></div>
<div style="position:absolute;left:22px;top:622px;width:1.6px;height:14px;background:#3b4a5c;"></div>
<div style="position:absolute;left:28.5px;top:622px;width:1.6px;height:14px;background:#3b4a5c;"></div>
<div style="position:absolute;left:56.5px;top:621.5px;width:3px;height:3px;background:#3b4a5c;border-radius:2px;"></div>
<div style="position:absolute;left:56.5px;top:627.5px;width:3px;height:3px;background:#3b4a5c;border-radius:2px;"></div>
<div style="position:absolute;left:56.5px;top:633.5px;width:3px;height:3px;background:#3b4a5c;border-radius:2px;"></div>
<div style="position:absolute;left:105px;top:620.0px;height:18px;line-height:18px;font-size:12px;color:#2e3540;font-weight:normal;white-space:pre;">RAM 1.56 GB</div>
<div style="position:absolute;left:186px;top:620.0px;height:18px;line-height:18px;font-size:12px;color:#2e3540;font-weight:normal;white-space:pre;">CPU 0.50%</div>
<div style="position:absolute;left:262px;top:620.0px;height:18px;line-height:18px;font-size:12px;color:#2e3540;font-weight:normal;white-space:pre;">Disk: 32.22 GB used (limit 58.37 GB)</div>
<svg style="position:absolute;left:856px;top:621px;" width="18" height="16" viewBox="0 0 18 16" fill="none"><path d="M3 3.5l5 4.5-5 4.5M9 13h6" stroke="#1a1c1f" stroke-width="1.5" stroke-linecap="round" stroke-linejoin="round"/></svg>
<svg style="position:absolute;left:881.0px;top:621.0px" width="16" height="16" viewBox="0 0 24 24" fill="none" stroke="#c2511f" stroke-width="2.2" stroke-linecap="round" stroke-linejoin="round"><circle cx="12" cy="12" r="9.5"/><path d="M12 11v6M12 7.3v.4"/></svg>
</div>
</div></div></body></html>
